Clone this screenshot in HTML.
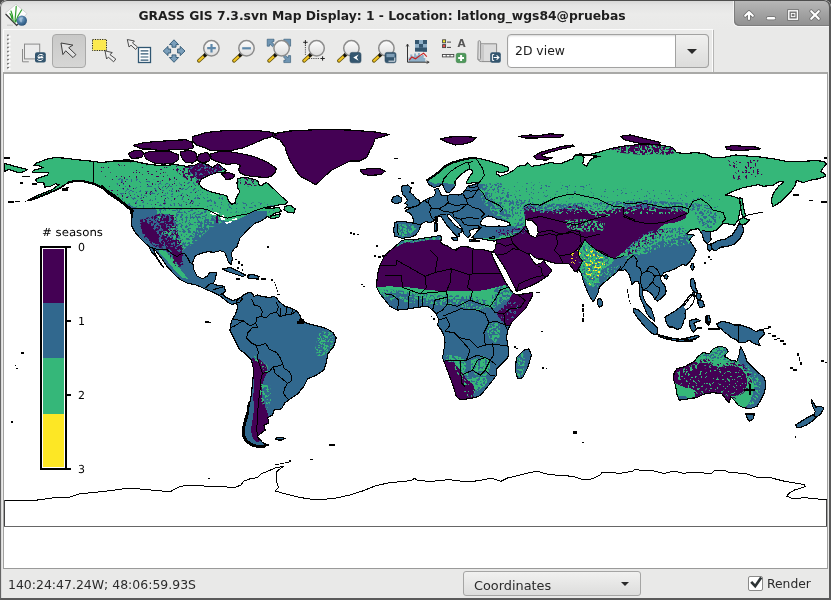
<!DOCTYPE html>
<html lang="en">
<head>
<meta charset="utf-8">
<title>GRASS GIS 7.3.svn Map Display: 1 - Location: latlong_wgs84@pruebas</title>
<style>
html,body{margin:0;padding:0;}
body{width:831px;height:600px;overflow:hidden;background:#4a4a4a;font-family:"DejaVu Sans","Liberation Sans",sans-serif;position:relative;}
#win{position:absolute;left:0;top:0;width:831px;height:600px;box-sizing:border-box;background:#e9e9e8;border-radius:7px 7px 0 0;overflow:hidden;}
#frame{position:absolute;left:0;top:0;width:831px;height:600px;box-sizing:border-box;border-left:1px solid #646464;border-right:2px solid #5a5a5a;border-top:1px solid #4e4e4e;border-bottom:2px solid #5a5a5a;border-radius:7px 7px 0 0;box-shadow:inset 1px 0 0 #dadada;pointer-events:none;}
#titlebar{position:absolute;left:0;top:0;width:831px;height:29px;background:linear-gradient(#d4d4d4 0px,#e4e4e4 5px,#ebebea 14px,#e9e9e8 29px);}
#title{position:absolute;left:0;top:8.5px;width:764px;text-align:center;font-weight:bold;font-size:12.35px;color:#1e1e1e;white-space:nowrap;letter-spacing:0px;}
#ctl{position:absolute;left:734px;top:0;width:97px;height:26px;background:linear-gradient(#b9b9b9,#a6a6a6 45%,#909090);border-bottom-left-radius:5px;box-shadow:-1px 1px 0 #f4f4f4, inset 1px -1px 0 #7d7d7d;}
#toolbar{position:absolute;left:3px;top:29px;width:710px;height:43px;border-top:1px solid #fcfcfc;border-left:1px solid #fcfcfc;border-right:1px solid #fcfcfc;box-sizing:border-box;background:#eaeae9;}
#tbshadow{position:absolute;left:713px;top:30px;width:1px;height:42px;background:#b6b6b5}
#grip{display:none}
#selbtn{position:absolute;left:52px;top:34px;width:34px;height:34px;box-sizing:border-box;border:1px solid #a9a9a8;border-radius:4px;background:linear-gradient(#c9c9c8,#d6d6d5);}
#combo{position:absolute;left:507px;top:34px;width:202px;height:34px;box-sizing:border-box;border:1px solid #a2a2a1;border-radius:4px;background:#fff;box-shadow:inset 0 1px 2px #d8d8d8;}
#combo span{position:absolute;left:7.2px;top:8.3px;font-size:12.4px;color:#1a1a1a;}
#combobtn{position:absolute;left:167px;top:-1px;width:34px;height:34px;box-sizing:border-box;border:1px solid #a2a2a1;border-radius:0 4px 4px 0;background:linear-gradient(#f0f0ef,#dcdcdb);}
#combobtn i{position:absolute;left:11px;top:14px;width:0;height:0;border-left:5px solid transparent;border-right:5px solid transparent;border-top:5px solid #2a2a2a;}
#canvas{position:absolute;left:3px;top:72px;width:825px;height:497px;box-sizing:border-box;border:1px solid #a2a2a1;border-top:2px solid #a9a9a7;border-bottom:1px solid #9a9a99;background:#fff;}
#status{position:absolute;left:8px;top:576.5px;font-size:12.47px;color:#2b2b2b;white-space:nowrap;}
#choice{position:absolute;left:463px;top:571px;width:178px;height:25px;box-sizing:border-box;border:1px solid #a5a5a4;border-radius:3px;background:linear-gradient(#f1f1f0,#dddddc);}
#choice span{position:absolute;left:9.6px;top:6.2px;font-size:12.87px;color:#2b2b2b;}
#choice i{position:absolute;left:157px;top:10px;width:0;height:0;border-left:4px solid transparent;border-right:4px solid transparent;border-top:4px solid #2a2a2a;}
#chk{position:absolute;left:747.5px;top:575.5px;width:15px;height:15px;box-sizing:border-box;border:1px solid #8a8a89;border-radius:2px;background:#fff;}
#render{position:absolute;left:766.5px;top:577.4px;font-size:12.35px;color:#2b2b2b;}
svg{position:absolute;left:0;top:0;}
#title,#status,#render,#combo span,#choice span{will-change:transform;}
</style>
</head>
<body>
<div id="win">
<div style="position:absolute;left:0;top:0;width:831px;height:600px;">
<div id="titlebar"></div>
<div id="title">GRASS GIS 7.3.svn Map Display: 1 - Location: latlong_wgs84@pruebas</div>
<div id="ctl"></div>
<div id="toolbar"></div>
<div id="tbshadow"></div>
<div id="grip"></div>
<div id="selbtn"></div>
<div id="combo"><span>2D view</span><div id="combobtn"><i></i></div></div>
<div id="canvas"></div>
<div id="status">140:24:47.24W; 48:06:59.93S</div>
<div id="choice"><span>Coordinates</span><i></i></div>
<div id="chk"></div>
<div id="render">Render</div>
<svg width="831" height="600" viewBox="0 0 831 600" shape-rendering="crispEdges">
<defs>
<clipPath id="cv"><rect x="4" y="74" width="823" height="494"/></clipPath>
<clipPath id="c_na"><path d="M33.7,165.2 36.2,163.2 42.1,161 48.9,158.5 55.6,157.6 64,158.1 74.1,159.3 84.2,160.5 93.5,161.3 101.1,162.7 107.8,161.8 117.9,160.5 128,160.2 134.8,161.8 115,161.3 127.5,159.5 137.5,162.1 150.1,164.6 162.6,165.6 175.1,164.6 186.4,166.3 195.1,165.1 200.1,162.6 207.6,164.6 212.6,167.6 217.6,163.8 226.2,170.3 223.4,173.1 218.1,172.1 208.9,175.3 201.6,178.8 198.9,183.3 201.6,187.6 208.9,191.1 216.1,193.3 223.4,194.8 226.9,196.1 228.4,200.6 231.2,204.1 234.9,203.6 235.7,199.1 237.7,194.8 239.9,191.8 237.7,187.6 236.9,183.3 237.7,178.8 243.4,177.3 249.2,178.1 255.2,179.6 257.9,181.1 258.7,184.6 261,186.1 263.7,183.8 266.7,182.6 274,189.1 281,196.1 287.5,201.4 286.5,203.9 280.2,204.6 272.7,206.4 265.2,208.9 272.7,208.1 279,207.6 281.5,211.4 275.2,213.1 270.2,216.4 275.2,215.1 280.2,213.9 279,217.1 272.7,218.9 267.2,216.4 265.2,218.1 260.2,221.4 255.2,223.1 251.4,226.4 247.7,229.6 243.9,233.9 240.2,237.6 238.2,242.7 237.2,246.4 233.9,248.9 231.4,252.7 232.2,258.9 231.2,264.7 228.2,261.4 226.4,256.4 224.7,252.2 220.2,250.7 213.9,252.2 207.6,251.7 201.4,253.2 196.4,255.2 195.1,256.3 192.6,262.5 193.9,270.1 197.1,276.3 202.6,278.8 207.1,276.3 209.6,272.6 216.4,272.1 215.6,278.8 213.1,283.8 218.1,285.6 224.4,286.3 225.2,291.3 222.7,294.6 226.4,297.6 232.7,300.6 237.2,299.1 240.2,297.1 242.7,298.8 239.2,302.6 235.2,303.1 232.2,304.6 228.2,302.6 223.9,298.8 219.6,295.6 213.9,292.6 207.6,290.1 201.4,287.1 196.4,285.1 187.6,283.1 180.1,279.6 173.8,273.8 167.1,266.3 161.3,258 156.3,251.3 152.6,248 155.6,255 160.1,262.5 163.8,267.5 161.3,265 156.3,257.5 151.3,251.3 148.8,246.3 141.3,239.5 135,232 133.8,230.1 131.3,225.1 132,217.6 131.3,210.6 125,204.6 115.5,198.1 108,193.1 101.3,185.6 133.1,211.5 128,206.5 121.3,201.4 114.6,195.5 107.8,191.3 101.1,187.1 94.3,184.1 87.6,182.1 80.9,180.7 74.1,181.2 67.4,182.9 64,185.4 57.3,189.6 48.9,193 38.7,197.2 29.5,200.6 27.8,200.3 35.4,196.4 43.8,193 52.2,189.6 59,184.6 55.6,183.7 50.5,186.3 44.6,187.1 43.8,182.9 37.1,182.1 35.4,179.5 38.7,177.9 47.2,175.3 48.9,172.8 40.4,172.8 32,172 33.7,170.3 43,167.7 40.4,166.1Z" clip-rule="evenodd"/></clipPath>
<clipPath id="c_sa"><path d="M236.2,301.1 239.6,298.2 243.8,294.9 248.9,292.3 252.2,293.2 253.9,296.5 257.3,294.9 262.3,296.5 269.1,297.4 274.1,296.5 276.7,298.2 279.2,301.6 284.2,305.8 291,308.3 296.9,310.9 300.2,315.9 301.9,321 307.8,323.5 314.6,325.2 321.3,326.9 328,329.4 333.1,332.8 335.6,337 336.4,337.5 333.9,346.3 327.7,353.8 326.4,362.6 323.9,370.1 316.4,375.1 307.7,378.8 303.9,386.4 297.6,393.9 290.1,398.9 285.1,402.6 281.4,408.9 273.9,410.1 272.6,415.1 267.6,417.6 268.9,422.7 263.9,425.2 265.1,430.2 260.1,433.9 257.6,436.4 262.6,442.7 268.9,445.2 260.1,447.7 251.3,445.2 246.3,442.7 242.6,435.2 242.6,427.7 246.3,417.6 248.8,407.6 251.3,395.1 252.6,382.6 253.8,370.1 251.3,360.1 243.8,352.6 239.6,349.6 236.2,342.9 232.9,336.1 230,331.1 230.3,326 232,320.1 235.4,314.2 237.9,307.5Z" clip-rule="evenodd"/></clipPath>
<clipPath id="c_eurasia"><path d="M394.3,235.9 393.8,229.2 395.1,222.4 400.2,221.1 406.9,222.1 414,223.3 412.8,217.4 410.3,213.2 404.9,211 410.3,208.1 416.2,206.4 419.5,203.6 424.6,200.5 429.1,198 433.9,196.3 435.5,193 434.7,189.6 438.1,188.4 440.3,193 441.4,195.8 447.3,195.5 452.4,194.1 459.1,195.1 462.8,193.5 464.2,191.3 465.9,189.6 466.7,187.1 469.2,185.7 472.6,185 476.8,183.7 479.7,182.3 474.3,182.3 469.2,183.4 466.2,183.7 466.9,181.2 469.2,177 472.6,172.7 471.9,169.9 469.2,169.2 465.5,171.1 461.1,174.4 457.1,178.3 454.9,182 455.4,185.7 452.4,189.1 449.9,192.1 446.5,192.5 444,187.9 442.3,183.7 439.2,186.2 433.9,187.4 428.8,184.5 426.8,180.3 432.2,177 438.9,171.9 445.6,166 452.4,162.6 460.8,160.1 469.2,158.4 476.8,158.1 486.1,160.1 494.5,162.6 502.9,165.2 508.8,167.7 508,171.1 501.2,172.7 496.2,171.6 496.4,173.8 500.1,176.3 507.6,173.8 513.9,170.1 517.6,166.3 525.2,165.1 527.7,162.6 531.4,166.3 540.2,165.1 550.2,162.6 560.2,163.8 566.5,161.3 572.7,158.8 575.2,155 580.2,153.8 584,157.5 582.7,163.8 586.5,166.3 590.2,160.1 594,157.5 600.3,156.3 575,155 580,153.8 587.5,155 597.5,152.5 610.1,148.8 622.6,146.3 635.1,145 647.6,143.8 660.1,145 672.6,147.5 676.4,152.5 685.2,153.8 695.2,152.5 705.2,153.8 712.7,157.5 722.7,157.5 735.2,155 750.2,156.3 755.7,156.3 763.2,157.5 773.2,158.8 785.7,161.3 803.2,161.3 815.7,160.6 823.3,161.3 827,163.8 823.3,167.6 820.7,171.3 824.5,173.8 825.8,176.3 818.2,178.8 810.7,180.1 803.2,182.6 796.2,180.1 795.7,184.6 791.7,190.6 786.7,195.6 780.2,202.1 772.7,206.9 771.2,199.6 773.7,192.6 778.7,186.1 783.7,182.1 779.4,181.3 773.2,185.1 763.2,186.3 758.2,184.6 743.2,187.6 733.1,191.3 725.6,195.1 733.1,196.3 739.4,198.8 741.1,205.1 739.6,212.6 738.1,220.1 734.4,225.1 728.1,223.9 723.1,223.1 716.1,230.1 710.1,232.1 711.1,239.6 707.1,243.7 703.6,240.2 702.6,234.6 698.1,228.6 690.6,230.1 686.1,233.9 694.3,235.1 692.7,236 689.3,240.2 692.7,245.2 696.1,250.3 693.6,256.2 690.2,261.2 686,265.4 682.7,264.3 676,268.3 669.3,271 664,272.6 660.7,277 660,277.9 661.6,281.7 664.7,285.7 666.1,291 664.8,295 660.3,299 657.3,301.1 654.9,299.3 651.7,293.9 647.3,290.7 642.9,289.9 642.5,292.1 642.9,296.1 644.5,300.1 646.5,304.1 649.1,306.5 651.5,309 652.5,313 654,317 654.9,321.5 654.5,321 652,319 649.1,316.5 646.5,313 645.1,309 643.5,305 641.5,301 640,296.1 639.5,292.1 640,288.3 638.7,281.7 634.9,281.7 632,284.3 631.2,281.7 629.3,275 625.6,269.7 620,270.7 622,269.6 618.6,270.5 621.1,266.2 619.4,268.7 616.9,272.1 612.7,275.5 607.6,279.7 602.5,283.9 599.2,287.3 598.3,292.3 595.8,297.4 593.3,301.6 590.8,298.2 588.2,293.2 585.7,287.3 583.2,280.5 581.5,273.8 579,269.6 577.3,272.1 574.8,271.3 572.2,267.9 568.9,263.7 562.1,263.7 553.7,262.9 545.3,260.3 544.3,259.7 543.4,260.5 546,263.9 549.3,267.3 551.9,271 546.8,276.5 539.2,281.6 530.8,285.8 522.4,289.2 516.3,291.4 515.1,287.8 511.9,281.9 508.6,275.2 505.2,268.5 501,261.7 496.6,255.1 495.1,253 492.9,251.3 495.4,248.7 496.3,242.9 497.1,239.5 494.6,241.2 488.7,240.3 480.3,238.6 471.8,237.8 477.7,230.9 481,227.5 476.8,228.3 472.6,229.2 469.2,230.9 470.9,235.1 467.5,237.6 464.2,234.2 462.5,229.2 459.1,224.1 454.1,219.1 449.9,214.9 447,214.4 447.3,216 449.4,218.9 452.4,222.3 454.9,225.3 457.4,227 460.8,229 462.8,231.2 458.8,233.7 459.5,236.3 457.1,236.6 454.9,234.6 451.5,230.4 447.7,226.1 444,221.1 441.4,216.9 438.6,216 433.9,220.8 430.5,222.4 425.4,221.6 421.2,224.1 419.9,227.8 418.2,231.7 415.3,235.1 410.3,237.3 401.8,238.3 397.6,236.8Z M480.3,222.6 482.8,218.4 488.7,215.9 494.6,217.6 497.1,219.3 502.2,220.1 508.9,222.6 510.6,225.2 505.5,226.5 498.8,226 492.1,226.8 485.3,226 481.1,225.2Z M525.9,219.6 532.7,220.9 536.9,225.1 538.2,232.6 535.7,237.6 530.2,235.6 527.7,230.1 525.2,225.1Z M525.8,253 529.1,254.6 532.5,260.5 535.9,264.8 540.9,263.1 543.9,260 542.6,258.9 537.5,258.9 533.3,256.3 530,253Z" clip-rule="evenodd"/></clipPath>
<clipPath id="c_africa"><path d="M397.6,244.3 401,241 406.9,239.3 413.6,240.1 421.2,238.4 428.8,237.6 435.5,236.3 439.8,235.6 441.9,237.6 440.6,241.8 443.1,244.3 448.2,246.4 452.4,249.4 456.6,250.2 459.1,247.7 455,249.6 461.7,246.2 468.5,247.1 475.2,249.6 482.8,249.6 489.5,251.3 492.9,251.3 491.2,253 494.6,260.5 498,267.3 501.3,274 504.7,280.8 508.9,287.5 512.8,292.9 516.5,294.7 522.4,294.1 532.5,292.7 532.8,294.7 530.2,300.1 525.2,308.8 517.7,316.3 511.4,322.6 507.7,330.1 506.4,337.6 507.7,345.1 508.9,351.4 507.7,357.6 501.4,363.9 496.4,368.9 496.4,375.2 492.7,380.2 487.7,386.4 482.7,392.7 479.6,395.6 475.1,397.6 467.6,398.8 460.1,399.6 456.3,396.3 453.8,387.6 450.1,377.6 446.3,367.5 442.6,357.5 443.9,350.1 445.1,342.6 443.9,335.1 441.4,330.1 437.6,325.1 438.8,320.1 436.3,313.8 432.6,310.1 427.6,306.3 418.8,307.1 408.8,308.8 397.5,310.1 390,306.3 385,300.1 380,293.8 376.3,286.3 377.5,275 380,265 385,255Z" clip-rule="evenodd"/></clipPath>
<clipPath id="c_madagascar"><path d="M516.4,357.6 524,350.1 529,348.9 531.5,355.1 527.7,367.6 522.7,377.7 517.7,378.9 515.2,370.2Z" clip-rule="evenodd"/></clipPath>
<clipPath id="c_australia"><path d="M674.3,372.6 676.8,368.8 685.6,366.3 694.3,361.3 698.1,356.3 703.1,352.6 709.4,353.8 713.1,348.8 719.4,346.3 725.6,347.6 728.1,351.3 724.4,356.3 730.6,360.1 736.9,361.3 739.4,353.8 740.6,346.3 744.4,353.8 746.9,361.3 753.2,367.6 759.4,373.8 764.4,377.6 765.7,385.1 764.4,392.6 760.7,400.1 756.9,406.4 749.4,408.9 743.2,407.6 738.1,405.1 734.4,400.1 730.6,396.4 729.4,402.6 725.6,398.9 721.9,393.9 713.1,392.6 704.4,393.9 696.8,397.6 688.1,398.9 679.3,400.1 676.8,393.9 675.6,385.1 673.1,378.8Z" clip-rule="evenodd"/></clipPath>
<clipPath id="c_borneo"><path d="M665,317 670,314 675,311 679,308 683,305 687,299 691,294 695,297 693,303 689,308 686,310 685,313 686,317 684,320 683,324 681,328 677,329.5 673,327 669,327 667,324 665.5,320Z" clip-rule="evenodd"/></clipPath>
<filter id="f31688e_40" x="0" y="0" width="1" height="1" color-interpolation-filters="sRGB"><feTurbulence type="fractalNoise" baseFrequency="0.42" numOctaves="2" seed="11"/><feColorMatrix type="matrix" values="0 0 0 0 0.192 0 0 0 0 0.408 0 0 0 0 0.557 60 0 0 0 -31.50"/></filter>
<filter id="f440154_50" x="0" y="0" width="1" height="1" color-interpolation-filters="sRGB"><feTurbulence type="fractalNoise" baseFrequency="0.42" numOctaves="2" seed="3"/><feColorMatrix type="matrix" values="0 0 0 0 0.267 0 0 0 0 0.004 0 0 0 0 0.329 60 0 0 0 -29.62"/></filter>
<filter id="f35b779_30" x="0" y="0" width="1" height="1" color-interpolation-filters="sRGB"><feTurbulence type="fractalNoise" baseFrequency="0.42" numOctaves="2" seed="23"/><feColorMatrix type="matrix" values="0 0 0 0 0.208 0 0 0 0 0.718 0 0 0 0 0.475 60 0 0 0 -33.46"/></filter>
<filter id="f31688e_30" x="0" y="0" width="1" height="1" color-interpolation-filters="sRGB"><feTurbulence type="fractalNoise" baseFrequency="0.42" numOctaves="2" seed="11"/><feColorMatrix type="matrix" values="0 0 0 0 0.192 0 0 0 0 0.408 0 0 0 0 0.557 60 0 0 0 -33.46"/></filter>
<filter id="f31688e_25" x="0" y="0" width="1" height="1" color-interpolation-filters="sRGB"><feTurbulence type="fractalNoise" baseFrequency="0.42" numOctaves="2" seed="11"/><feColorMatrix type="matrix" values="0 0 0 0 0.192 0 0 0 0 0.408 0 0 0 0 0.557 60 0 0 0 -34.62"/></filter>
<filter id="f440154_35" x="0" y="0" width="1" height="1" color-interpolation-filters="sRGB"><feTurbulence type="fractalNoise" baseFrequency="0.42" numOctaves="2" seed="3"/><feColorMatrix type="matrix" values="0 0 0 0 0.267 0 0 0 0 0.004 0 0 0 0 0.329 60 0 0 0 -32.44"/></filter>
<filter id="f440154_30" x="0" y="0" width="1" height="1" color-interpolation-filters="sRGB"><feTurbulence type="fractalNoise" baseFrequency="0.42" numOctaves="2" seed="3"/><feColorMatrix type="matrix" values="0 0 0 0 0.267 0 0 0 0 0.004 0 0 0 0 0.329 60 0 0 0 -33.46"/></filter>
<filter id="f440154_5" x="0" y="0" width="1" height="1" color-interpolation-filters="sRGB"><feTurbulence type="fractalNoise" baseFrequency="0.42" numOctaves="2" seed="3"/><feColorMatrix type="matrix" values="0 0 0 0 0.267 0 0 0 0 0.004 0 0 0 0 0.329 60 0 0 0 -41.73"/></filter>
<filter id="f31688e_11" x="0" y="0" width="1" height="1" color-interpolation-filters="sRGB"><feTurbulence type="fractalNoise" baseFrequency="0.42" numOctaves="2" seed="11"/><feColorMatrix type="matrix" values="0 0 0 0 0.192 0 0 0 0 0.408 0 0 0 0 0.557 60 0 0 0 -38.67"/></filter>
<filter id="f35b779_40" x="0" y="0" width="1" height="1" color-interpolation-filters="sRGB"><feTurbulence type="fractalNoise" baseFrequency="0.42" numOctaves="2" seed="23"/><feColorMatrix type="matrix" values="0 0 0 0 0.208 0 0 0 0 0.718 0 0 0 0 0.475 60 0 0 0 -31.50"/></filter>
<filter id="f31688e_50" x="0" y="0" width="1" height="1" color-interpolation-filters="sRGB"><feTurbulence type="fractalNoise" baseFrequency="0.42" numOctaves="2" seed="11"/><feColorMatrix type="matrix" values="0 0 0 0 0.192 0 0 0 0 0.408 0 0 0 0 0.557 60 0 0 0 -29.62"/></filter>
<filter id="f35b779_35" x="0" y="0" width="1" height="1" color-interpolation-filters="sRGB"><feTurbulence type="fractalNoise" baseFrequency="0.42" numOctaves="2" seed="23"/><feColorMatrix type="matrix" values="0 0 0 0 0.208 0 0 0 0 0.718 0 0 0 0 0.475 60 0 0 0 -32.44"/></filter>
<filter id="f31688e_14" x="0" y="0" width="1" height="1" color-interpolation-filters="sRGB"><feTurbulence type="fractalNoise" baseFrequency="0.42" numOctaves="2" seed="11"/><feColorMatrix type="matrix" values="0 0 0 0 0.192 0 0 0 0 0.408 0 0 0 0 0.557 60 0 0 0 -37.67"/></filter>
<filter id="f35b779_50" x="0" y="0" width="1" height="1" color-interpolation-filters="sRGB"><feTurbulence type="fractalNoise" baseFrequency="0.42" numOctaves="2" seed="23"/><feColorMatrix type="matrix" values="0 0 0 0 0.208 0 0 0 0 0.718 0 0 0 0 0.475 60 0 0 0 -29.62"/></filter>
<filter id="f35b779_14" x="0" y="0" width="1" height="1" color-interpolation-filters="sRGB"><feTurbulence type="fractalNoise" baseFrequency="0.42" numOctaves="2" seed="23"/><feColorMatrix type="matrix" values="0 0 0 0 0.208 0 0 0 0 0.718 0 0 0 0 0.475 60 0 0 0 -37.67"/></filter>
<filter id="f31688e_28" x="0" y="0" width="1" height="1" color-interpolation-filters="sRGB"><feTurbulence type="fractalNoise" baseFrequency="0.42" numOctaves="2" seed="11"/><feColorMatrix type="matrix" values="0 0 0 0 0.192 0 0 0 0 0.408 0 0 0 0 0.557 60 0 0 0 -33.92"/></filter>
<filter id="f31688e_55" x="0" y="0" width="1" height="1" color-interpolation-filters="sRGB"><feTurbulence type="fractalNoise" baseFrequency="0.42" numOctaves="2" seed="11"/><feColorMatrix type="matrix" values="0 0 0 0 0.192 0 0 0 0 0.408 0 0 0 0 0.557 60 0 0 0 -28.69"/></filter>
<filter id="f35b779_22" x="0" y="0" width="1" height="1" color-interpolation-filters="sRGB"><feTurbulence type="fractalNoise" baseFrequency="0.42" numOctaves="2" seed="23"/><feColorMatrix type="matrix" values="0 0 0 0 0.208 0 0 0 0 0.718 0 0 0 0 0.475 60 0 0 0 -35.31"/></filter>
<filter id="f35b779_45" x="0" y="0" width="1" height="1" color-interpolation-filters="sRGB"><feTurbulence type="fractalNoise" baseFrequency="0.42" numOctaves="2" seed="23"/><feColorMatrix type="matrix" values="0 0 0 0 0.208 0 0 0 0 0.718 0 0 0 0 0.475 60 0 0 0 -30.56"/></filter>
<filter id="f31688e_35" x="0" y="0" width="1" height="1" color-interpolation-filters="sRGB"><feTurbulence type="fractalNoise" baseFrequency="0.42" numOctaves="2" seed="11"/><feColorMatrix type="matrix" values="0 0 0 0 0.192 0 0 0 0 0.408 0 0 0 0 0.557 60 0 0 0 -32.44"/></filter>
<filter id="f440154_25" x="0" y="0" width="1" height="1" color-interpolation-filters="sRGB"><feTurbulence type="fractalNoise" baseFrequency="0.42" numOctaves="2" seed="3"/><feColorMatrix type="matrix" values="0 0 0 0 0.267 0 0 0 0 0.004 0 0 0 0 0.329 60 0 0 0 -34.62"/></filter>
<filter id="ffde725_22" x="0" y="0" width="1" height="1" color-interpolation-filters="sRGB"><feTurbulence type="fractalNoise" baseFrequency="0.42" numOctaves="2" seed="37"/><feColorMatrix type="matrix" values="0 0 0 0 0.992 0 0 0 0 0.906 0 0 0 0 0.145 60 0 0 0 -35.31"/></filter>
<filter id="ffde725_10" x="0" y="0" width="1" height="1" color-interpolation-filters="sRGB"><feTurbulence type="fractalNoise" baseFrequency="0.42" numOctaves="2" seed="37"/><feColorMatrix type="matrix" values="0 0 0 0 0.992 0 0 0 0 0.906 0 0 0 0 0.145 60 0 0 0 -39.00"/></filter>
<filter id="f35b779_20" x="0" y="0" width="1" height="1" color-interpolation-filters="sRGB"><feTurbulence type="fractalNoise" baseFrequency="0.42" numOctaves="2" seed="23"/><feColorMatrix type="matrix" values="0 0 0 0 0.208 0 0 0 0 0.718 0 0 0 0 0.475 60 0 0 0 -35.77"/></filter>
<filter id="f440154_60" x="0" y="0" width="1" height="1" color-interpolation-filters="sRGB"><feTurbulence type="fractalNoise" baseFrequency="0.42" numOctaves="2" seed="3"/><feColorMatrix type="matrix" values="0 0 0 0 0.267 0 0 0 0 0.004 0 0 0 0 0.329 60 0 0 0 -27.75"/></filter>
<filter id="f440154_15" x="0" y="0" width="1" height="1" color-interpolation-filters="sRGB"><feTurbulence type="fractalNoise" baseFrequency="0.42" numOctaves="2" seed="3"/><feColorMatrix type="matrix" values="0 0 0 0 0.267 0 0 0 0 0.004 0 0 0 0 0.329 60 0 0 0 -37.33"/></filter>
<filter id="f31688e_6" x="0" y="0" width="1" height="1" color-interpolation-filters="sRGB"><feTurbulence type="fractalNoise" baseFrequency="0.42" numOctaves="2" seed="11"/><feColorMatrix type="matrix" values="0 0 0 0 0.192 0 0 0 0 0.408 0 0 0 0 0.557 60 0 0 0 -41.18"/></filter>
<filter id="f31688e_45" x="0" y="0" width="1" height="1" color-interpolation-filters="sRGB"><feTurbulence type="fractalNoise" baseFrequency="0.42" numOctaves="2" seed="11"/><feColorMatrix type="matrix" values="0 0 0 0 0.192 0 0 0 0 0.408 0 0 0 0 0.557 60 0 0 0 -30.56"/></filter>
<filter id="f35b779_9" x="0" y="0" width="1" height="1" color-interpolation-filters="sRGB"><feTurbulence type="fractalNoise" baseFrequency="0.42" numOctaves="2" seed="23"/><feColorMatrix type="matrix" values="0 0 0 0 0.208 0 0 0 0 0.718 0 0 0 0 0.475 60 0 0 0 -39.55"/></filter>
<filter id="f35b779_25" x="0" y="0" width="1" height="1" color-interpolation-filters="sRGB"><feTurbulence type="fractalNoise" baseFrequency="0.42" numOctaves="2" seed="23"/><feColorMatrix type="matrix" values="0 0 0 0 0.208 0 0 0 0 0.718 0 0 0 0 0.475 60 0 0 0 -34.62"/></filter>
<clipPath id="k1"><path d="M136.9,209.2 158.8,209.2 161.3,220.3 158.8,228.7 148.7,223.6 140.3,220.3Z"/></clipPath>
<clipPath id="k2"><path d="M138.6,220.3 160.5,213.5 175.6,215.2 177.3,228.7 182.4,245.5 184.1,265.8 175.6,267.4 165.5,248.9 155.4,247.2 143.6,237.1Z"/></clipPath>
<clipPath id="k3"><path d="M189.1,209.2 232.9,209.2 236.3,220.3 222.8,222 209.3,228.7 199.2,238.8 190.8,245.5 187.4,245.5 198.4,226.2Z"/></clipPath>
<clipPath id="k4"><path d="M156.3,209.2 206.8,209.2 211.9,215.2 202.6,220.3 195,232.9 188.3,245.5 179.9,252.3 173.1,250.6 163,235.4 158,218.6Z"/></clipPath>
<clipPath id="k5"><path d="M185.1,165.1 200.1,161.3 231.4,164.6 217.6,171.8 201.4,181.3 192.6,180.1Z"/></clipPath>
<clipPath id="k6"><path d="M175.1,164.6 187.6,166.3 191.4,173.1 196.4,178.1 201.4,181.3 198.9,185.6 187.6,180.1 177.6,172.6Z"/></clipPath>
<clipPath id="k7"><path d="M237.7,178.8 243.4,177.3 255.2,179.6 258.7,184.6 252.7,187.1 243.9,185.6 238.9,183.1Z"/></clipPath>
<clipPath id="k8"><path d="M100,162.6 200.1,162.6 200.1,205.1 125,205.1 100,185.1Z"/></clipPath>
<clipPath id="k9"><path d="M115,177.6 200.1,182.6 240.2,202.6 275.2,202.6 275.2,212.6 125,212.6Z"/></clipPath>
<clipPath id="k10"><path d="M320.2,331.3 332.7,332.5 333.9,345.1 326.4,353.8 317.7,357.6 315.2,347.6 317.7,337.5Z"/></clipPath>
<clipPath id="k11"><path d="M260.1,382.6 270.1,385.1 271.4,400.1 266.4,410.1 261.4,402.6 259.6,392.6Z"/></clipPath>
<clipPath id="k12"><path d="M250.1,353.8 260.1,358.8 267.6,365.6 268.1,372.6 265.1,375.1 262.6,367.6 255.1,361.3Z"/></clipPath>
<clipPath id="k13"><path d="M495.2,287.5 505.2,285 510.2,287.5 512.7,293.8 507.7,300.1 500.2,303.8 492.7,308.8 490.2,300.1Z"/></clipPath>
<clipPath id="k14"><path d="M375.5,290.1 390,289.5 420.1,292.6 442.6,295.6 467.6,295.1 485.2,298.8 492.7,308.8 477.6,301.8 455.1,299.3 430.1,300.6 405.1,294.6 380,293.1Z"/></clipPath>
<clipPath id="k15"><path d="M380,293.1 420.1,297.1 455.1,299.3 485.2,306.8 485.2,312.6 455.1,306.3 420.1,303.8 385,300.1Z"/></clipPath>
<clipPath id="k16"><path d="M500.2,308.8 510.2,298.8 520.2,305.1 515.2,317.6 503.9,325.1 496.4,313.8Z"/></clipPath>
<clipPath id="k17"><path d="M488.9,322.6 496.4,321.3 500.2,327.6 499.7,336.4 495.2,343.1 490.2,340.1 487.2,331.4Z"/></clipPath>
<clipPath id="k18"><path d="M445.1,353.8 492.6,355 491.4,380.1 482.6,393.8 470.1,392.6 460.1,375.1 445.1,367.5Z"/></clipPath>
<clipPath id="k19"><path d="M452.6,362.5 470.1,375.1 480.1,392.6 475.1,397.6 462.6,397.6 457.6,380.1Z"/></clipPath>
<clipPath id="k20"><path d="M453.8,362.5 461.3,371.3 466.3,378.8 472.6,383.8 476.3,395.6 467.6,400.1 462.6,387.6 456.3,375.1Z"/></clipPath>
<clipPath id="k21"><path d="M395.1,239.3 401.8,236.8 410.3,237.6 420.4,236.8 428.8,236.3 440.6,236.3 441.4,239.3 435.5,240.1 428.8,240.1 421.2,241 413.6,242.7 406.9,242.3 401,244.3 396.8,246.9Z"/></clipPath>
<clipPath id="k22"><path d="M516.4,357.6 522.7,352.6 525.2,360.1 522.7,376.4 517.7,378.9 515.2,370.2Z"/></clipPath>
<clipPath id="k23"><path d="M485.1,183.8 488.1,192.6 493.1,200.1 500.6,206.4 506.4,210.6 511.4,216.4 506.4,220.1 495.1,215.1 485.1,205.1 477.6,192.6Z"/></clipPath>
<clipPath id="k24"><path d="M485.1,183.8 500.1,182.6 515.1,195.1 530.2,205.1 525.2,215.1 525.2,230.1 511.4,216.4 500.6,206.4 488.1,192.6Z"/></clipPath>
<clipPath id="k25"><path d="M477.6,226.4 505.1,226.4 525.2,220.1 530.2,230.1 520.2,235.1 500.1,235.6 482.6,233.9Z"/></clipPath>
<clipPath id="k26"><path d="M495.1,230.1 520.2,227.6 525.2,233.9 500.1,236.4Z"/></clipPath>
<clipPath id="k27"><path d="M399.3,224.1 412,225 417,227.5 412,234.2 403.5,236.8 397.6,235.1 396.8,229.2Z"/></clipPath>
<clipPath id="k28"><path d="M500,200 540,204 580,203 620,201 660,201 700,204 700,211 660,209 620,209 580,210 540,213 524,209Z"/></clipPath>
<clipPath id="k29"><path d="M524,207 560,208 620,207 680,209 683,214 640,214 600,214 560,214 530,212Z"/></clipPath>
<clipPath id="k30"><path d="M565,220.1 585,218.9 605.1,222.6 602.6,231.4 582.5,231.4 567.5,228.9Z"/></clipPath>
<clipPath id="k31"><path d="M582.5,202.6 600.1,200.1 612.6,207.6 610.1,216.4 597.5,217.6 585,211.4Z"/></clipPath>
<clipPath id="k32"><path d="M620.3,257 638.8,253.6 652.3,245.2 667.4,240.2 682.6,235.1 692.7,236 693.6,243.5 675.9,246.1 659,247.7 645.5,255.3 628.7,259.5Z"/></clipPath>
<clipPath id="k33"><path d="M622.8,252 633.7,241.8 645.5,232.6 662.4,228.4 682.6,226.7 689.3,233.4 675.9,238.5 659,241.8 645.5,250.3 628.7,255.3Z"/></clipPath>
<clipPath id="k34"><path d="M622.8,252 633.7,241.8 645.5,232.6 662.4,228.4 669.1,231.7 652.3,240.2 638.8,250.3 628.7,255.3Z"/></clipPath>
<clipPath id="k35"><path d="M586.5,248.5 594.1,248.5 607.6,258.6 604.2,268.7 595.8,280.5 594.1,286.4 589.1,283.9 585.7,273.8 584,260.3Z"/></clipPath>
<clipPath id="k36"><path d="M585.7,241 607.6,256.1 614.3,259.5 602.5,269.6 594.1,287.3 584.9,280.5 579.3,269.6 578.1,251.9Z"/></clipPath>
<clipPath id="k37"><path d="M568.9,255.3 579,246.8 584,250.2 579,263.7 570.5,263.7Z"/></clipPath>
<clipPath id="k38"><path d="M594.1,287.3 599.2,275.5 611.8,263.7 621.1,266.2 607.6,279.7 598.3,292.3Z"/></clipPath>
<clipPath id="k39"><path d="M610.1,148.8 622.6,146.3 635.1,145 647.6,143.8 660.1,145 672.6,147.5 676.4,152.5 667.6,155 655.1,153.8 642.6,155 630.1,153.8 617.6,152.5Z"/></clipPath>
<clipPath id="k40"><path d="M728.1,160.1 758.2,160.1 763.2,177.6 733.1,180.1Z"/></clipPath>
<clipPath id="k41"><path d="M510.1,182.6 608,182.6 608,202.6 525.2,203.9Z"/></clipPath>
<clipPath id="k42"><path d="M560,187.6 700.2,190.1 722.7,200.1 710.2,225.1 685.2,202.6 560,202.6Z"/></clipPath>
<clipPath id="k43"><path d="M690.2,202.6 710.2,205.1 720.2,217.6 710.2,230.1 700.2,225.1Z"/></clipPath>
<clipPath id="k44"><path d="M741.6,366.3 746.7,372.6 751.7,378.1 754.2,385.1 753.2,393.1 750.2,400.6 746.2,407.1 753.2,405.1 759.4,395.1 760.7,382.6 755.7,373.8 748.2,365.6Z"/></clipPath>
<clipPath id="k45"><path d="M698.1,356.3 703.1,352.6 709.4,353.8 713.1,348.8 719.4,346.3 725.6,347.6 728.1,351.3 724.4,356.3 730.6,360.1 736.9,361.3 733.1,363.8 718.1,358.8 705.6,358.8Z"/></clipPath>
<clipPath id="k46"><path d="M698.1,363.1 708.1,362.6 718.1,367.6 730.6,365.1 740.6,367.6 746.9,375.1 748.2,385.1 743.2,392.6 735.6,396.4 731.1,396.4 734.4,400.1 740.6,395.1 751.9,387.6 751.9,375.1 743.2,363.8 730.6,361.3 718.1,362.6 708.1,358.8 698.1,360.1Z"/></clipPath>
<clipPath id="k47"><path d="M676.8,372.6 685.6,367.6 698.1,362.6 698.1,368.8 685.6,373.8 678.1,380.1Z"/></clipPath>
<clipPath id="k48"><path d="M676.8,372.6 698.1,362.6 730.6,365.1 746.9,375.1 748.2,385.1 735.6,396.4 710.6,390.1 685.6,387.6 676.8,382.6Z"/></clipPath>
<clipPath id="k49"><path d="M685.6,387.6 710.6,390.1 730.6,393.9 730.6,397.6 721.9,393.9 704.4,394.6 693.1,393.1Z"/></clipPath>
<clipPath id="allland"><path d="M33.7,165.2 36.2,163.2 42.1,161 48.9,158.5 55.6,157.6 64,158.1 74.1,159.3 84.2,160.5 93.5,161.3 101.1,162.7 107.8,161.8 117.9,160.5 128,160.2 134.8,161.8 115,161.3 127.5,159.5 137.5,162.1 150.1,164.6 162.6,165.6 175.1,164.6 186.4,166.3 195.1,165.1 200.1,162.6 207.6,164.6 212.6,167.6 217.6,163.8 226.2,170.3 223.4,173.1 218.1,172.1 208.9,175.3 201.6,178.8 198.9,183.3 201.6,187.6 208.9,191.1 216.1,193.3 223.4,194.8 226.9,196.1 228.4,200.6 231.2,204.1 234.9,203.6 235.7,199.1 237.7,194.8 239.9,191.8 237.7,187.6 236.9,183.3 237.7,178.8 243.4,177.3 249.2,178.1 255.2,179.6 257.9,181.1 258.7,184.6 261,186.1 263.7,183.8 266.7,182.6 274,189.1 281,196.1 287.5,201.4 286.5,203.9 280.2,204.6 272.7,206.4 265.2,208.9 272.7,208.1 279,207.6 281.5,211.4 275.2,213.1 270.2,216.4 275.2,215.1 280.2,213.9 279,217.1 272.7,218.9 267.2,216.4 265.2,218.1 260.2,221.4 255.2,223.1 251.4,226.4 247.7,229.6 243.9,233.9 240.2,237.6 238.2,242.7 237.2,246.4 233.9,248.9 231.4,252.7 232.2,258.9 231.2,264.7 228.2,261.4 226.4,256.4 224.7,252.2 220.2,250.7 213.9,252.2 207.6,251.7 201.4,253.2 196.4,255.2 195.1,256.3 192.6,262.5 193.9,270.1 197.1,276.3 202.6,278.8 207.1,276.3 209.6,272.6 216.4,272.1 215.6,278.8 213.1,283.8 218.1,285.6 224.4,286.3 225.2,291.3 222.7,294.6 226.4,297.6 232.7,300.6 237.2,299.1 240.2,297.1 242.7,298.8 239.2,302.6 235.2,303.1 232.2,304.6 228.2,302.6 223.9,298.8 219.6,295.6 213.9,292.6 207.6,290.1 201.4,287.1 196.4,285.1 187.6,283.1 180.1,279.6 173.8,273.8 167.1,266.3 161.3,258 156.3,251.3 152.6,248 155.6,255 160.1,262.5 163.8,267.5 161.3,265 156.3,257.5 151.3,251.3 148.8,246.3 141.3,239.5 135,232 133.8,230.1 131.3,225.1 132,217.6 131.3,210.6 125,204.6 115.5,198.1 108,193.1 101.3,185.6 133.1,211.5 128,206.5 121.3,201.4 114.6,195.5 107.8,191.3 101.1,187.1 94.3,184.1 87.6,182.1 80.9,180.7 74.1,181.2 67.4,182.9 64,185.4 57.3,189.6 48.9,193 38.7,197.2 29.5,200.6 27.8,200.3 35.4,196.4 43.8,193 52.2,189.6 59,184.6 55.6,183.7 50.5,186.3 44.6,187.1 43.8,182.9 37.1,182.1 35.4,179.5 38.7,177.9 47.2,175.3 48.9,172.8 40.4,172.8 32,172 33.7,170.3 43,167.7 40.4,166.1Z" clip-rule="evenodd"/><path d="M128.2,154.1 131.9,151.2 140.6,150.2 143.8,153.4 141.7,157.7 131.9,158.4Z" clip-rule="evenodd"/><path d="M143.4,154.1 148.2,151.9 160.1,151.2 170.9,151.9 178,154.5 178.9,159.3 173.1,163.2 163.3,164.2 154.7,163.2 146.4,159.3Z" clip-rule="evenodd"/><path d="M133.4,145.4 143.8,142.8 152.5,141.9 163.3,141.1 175.2,140.2 186.1,139.8 192.6,142.6 193.2,148 185,149.7 176.3,149.3 167.6,150.2 159,150.6 150.3,148.9 141.7,148.9Z" clip-rule="evenodd"/><path d="M180.2,151.9 189.3,150.2 195.8,152.3 197.5,159.3 192.6,163.2 185,162.1 181.3,157.1Z" clip-rule="evenodd"/><path d="M192.6,136.7 206.6,132.4 224,130.7 241.3,130.2 258.6,130.7 272.7,132.4 276.4,135.4 264,138.9 255.4,142.8 250,145 242.4,148 232.6,150.2 219.6,151 209.9,150.2 204.5,147.6 196.2,145 192.8,141.1Z" clip-rule="evenodd"/><path d="M209.2,154.5 217.5,151.9 228.3,151.5 241.3,153.6 254.3,156.7 267.7,162.3 276.4,168.4 274.9,172.9 271.6,176.1 267.3,177.4 258.6,177 250,176.1 244.5,175.1 240.2,172.9 238.7,169.6 240.4,165.3 234.8,163.2 228.3,164.5 221.8,163.2 215.3,161 210.5,158.4Z" clip-rule="evenodd"/><path d="M198.4,154.5 206.6,152.3 211,156.7 208.8,161.6 201.2,162.7 197.1,159.9Z" clip-rule="evenodd"/><path d="M221.8,174 228.3,172.2 234.8,175.1 232.6,178.7 226.1,179.4Z" clip-rule="evenodd"/><path d="M272,134 290,131 320,129.5 350,130 375,132 389,134.5 375,139 373,145 370,150 367,157 360,161 350,161 342,165 332,170 325,176 319,182 315.5,184.5 309,181 300,176 295,169 291,162.5 287.5,155 285,147 280,140 273,137Z" clip-rule="evenodd"/><path d="M360,170 367.5,168.8 380,168.8 385,171.3 381,174.5 370,175.5 362.5,173.8Z" clip-rule="evenodd"/><path d="M284.7,206.4 290.2,205.1 295.2,208.9 294,213.1 287.7,212.1 284,209.6Z" clip-rule="evenodd"/><path d="M222.2,269 230.2,267.5 238.2,271.1 245.7,275.1 242.7,276.6 235.2,274.1 227.7,271.6Z" clip-rule="evenodd"/><path d="M247.7,275.1 253.2,274.6 259.2,276.6 258.2,279.1 252.2,278.6 248.2,278.1Z" clip-rule="evenodd"/><path d="M236.2,301.1 239.6,298.2 243.8,294.9 248.9,292.3 252.2,293.2 253.9,296.5 257.3,294.9 262.3,296.5 269.1,297.4 274.1,296.5 276.7,298.2 279.2,301.6 284.2,305.8 291,308.3 296.9,310.9 300.2,315.9 301.9,321 307.8,323.5 314.6,325.2 321.3,326.9 328,329.4 333.1,332.8 335.6,337 336.4,337.5 333.9,346.3 327.7,353.8 326.4,362.6 323.9,370.1 316.4,375.1 307.7,378.8 303.9,386.4 297.6,393.9 290.1,398.9 285.1,402.6 281.4,408.9 273.9,410.1 272.6,415.1 267.6,417.6 268.9,422.7 263.9,425.2 265.1,430.2 260.1,433.9 257.6,436.4 262.6,442.7 268.9,445.2 260.1,447.7 251.3,445.2 246.3,442.7 242.6,435.2 242.6,427.7 246.3,417.6 248.8,407.6 251.3,395.1 252.6,382.6 253.8,370.1 251.3,360.1 243.8,352.6 239.6,349.6 236.2,342.9 232.9,336.1 230,331.1 230.3,326 232,320.1 235.4,314.2 237.9,307.5Z" clip-rule="evenodd"/><path d="M275.1,438.2 280.1,437.2 285.1,438.4 281.4,440.2 276.4,439.7Z" clip-rule="evenodd"/><path d="M394.3,235.9 393.8,229.2 395.1,222.4 400.2,221.1 406.9,222.1 414,223.3 412.8,217.4 410.3,213.2 404.9,211 410.3,208.1 416.2,206.4 419.5,203.6 424.6,200.5 429.1,198 433.9,196.3 435.5,193 434.7,189.6 438.1,188.4 440.3,193 441.4,195.8 447.3,195.5 452.4,194.1 459.1,195.1 462.8,193.5 464.2,191.3 465.9,189.6 466.7,187.1 469.2,185.7 472.6,185 476.8,183.7 479.7,182.3 474.3,182.3 469.2,183.4 466.2,183.7 466.9,181.2 469.2,177 472.6,172.7 471.9,169.9 469.2,169.2 465.5,171.1 461.1,174.4 457.1,178.3 454.9,182 455.4,185.7 452.4,189.1 449.9,192.1 446.5,192.5 444,187.9 442.3,183.7 439.2,186.2 433.9,187.4 428.8,184.5 426.8,180.3 432.2,177 438.9,171.9 445.6,166 452.4,162.6 460.8,160.1 469.2,158.4 476.8,158.1 486.1,160.1 494.5,162.6 502.9,165.2 508.8,167.7 508,171.1 501.2,172.7 496.2,171.6 496.4,173.8 500.1,176.3 507.6,173.8 513.9,170.1 517.6,166.3 525.2,165.1 527.7,162.6 531.4,166.3 540.2,165.1 550.2,162.6 560.2,163.8 566.5,161.3 572.7,158.8 575.2,155 580.2,153.8 584,157.5 582.7,163.8 586.5,166.3 590.2,160.1 594,157.5 600.3,156.3 575,155 580,153.8 587.5,155 597.5,152.5 610.1,148.8 622.6,146.3 635.1,145 647.6,143.8 660.1,145 672.6,147.5 676.4,152.5 685.2,153.8 695.2,152.5 705.2,153.8 712.7,157.5 722.7,157.5 735.2,155 750.2,156.3 755.7,156.3 763.2,157.5 773.2,158.8 785.7,161.3 803.2,161.3 815.7,160.6 823.3,161.3 827,163.8 823.3,167.6 820.7,171.3 824.5,173.8 825.8,176.3 818.2,178.8 810.7,180.1 803.2,182.6 796.2,180.1 795.7,184.6 791.7,190.6 786.7,195.6 780.2,202.1 772.7,206.9 771.2,199.6 773.7,192.6 778.7,186.1 783.7,182.1 779.4,181.3 773.2,185.1 763.2,186.3 758.2,184.6 743.2,187.6 733.1,191.3 725.6,195.1 733.1,196.3 739.4,198.8 741.1,205.1 739.6,212.6 738.1,220.1 734.4,225.1 728.1,223.9 723.1,223.1 716.1,230.1 710.1,232.1 711.1,239.6 707.1,243.7 703.6,240.2 702.6,234.6 698.1,228.6 690.6,230.1 686.1,233.9 694.3,235.1 692.7,236 689.3,240.2 692.7,245.2 696.1,250.3 693.6,256.2 690.2,261.2 686,265.4 682.7,264.3 676,268.3 669.3,271 664,272.6 660.7,277 660,277.9 661.6,281.7 664.7,285.7 666.1,291 664.8,295 660.3,299 657.3,301.1 654.9,299.3 651.7,293.9 647.3,290.7 642.9,289.9 642.5,292.1 642.9,296.1 644.5,300.1 646.5,304.1 649.1,306.5 651.5,309 652.5,313 654,317 654.9,321.5 654.5,321 652,319 649.1,316.5 646.5,313 645.1,309 643.5,305 641.5,301 640,296.1 639.5,292.1 640,288.3 638.7,281.7 634.9,281.7 632,284.3 631.2,281.7 629.3,275 625.6,269.7 620,270.7 622,269.6 618.6,270.5 621.1,266.2 619.4,268.7 616.9,272.1 612.7,275.5 607.6,279.7 602.5,283.9 599.2,287.3 598.3,292.3 595.8,297.4 593.3,301.6 590.8,298.2 588.2,293.2 585.7,287.3 583.2,280.5 581.5,273.8 579,269.6 577.3,272.1 574.8,271.3 572.2,267.9 568.9,263.7 562.1,263.7 553.7,262.9 545.3,260.3 544.3,259.7 543.4,260.5 546,263.9 549.3,267.3 551.9,271 546.8,276.5 539.2,281.6 530.8,285.8 522.4,289.2 516.3,291.4 515.1,287.8 511.9,281.9 508.6,275.2 505.2,268.5 501,261.7 496.6,255.1 495.1,253 492.9,251.3 495.4,248.7 496.3,242.9 497.1,239.5 494.6,241.2 488.7,240.3 480.3,238.6 471.8,237.8 477.7,230.9 481,227.5 476.8,228.3 472.6,229.2 469.2,230.9 470.9,235.1 467.5,237.6 464.2,234.2 462.5,229.2 459.1,224.1 454.1,219.1 449.9,214.9 447,214.4 447.3,216 449.4,218.9 452.4,222.3 454.9,225.3 457.4,227 460.8,229 462.8,231.2 458.8,233.7 459.5,236.3 457.1,236.6 454.9,234.6 451.5,230.4 447.7,226.1 444,221.1 441.4,216.9 438.6,216 433.9,220.8 430.5,222.4 425.4,221.6 421.2,224.1 419.9,227.8 418.2,231.7 415.3,235.1 410.3,237.3 401.8,238.3 397.6,236.8Z M480.3,222.6 482.8,218.4 488.7,215.9 494.6,217.6 497.1,219.3 502.2,220.1 508.9,222.6 510.6,225.2 505.5,226.5 498.8,226 492.1,226.8 485.3,226 481.1,225.2Z M525.9,219.6 532.7,220.9 536.9,225.1 538.2,232.6 535.7,237.6 530.2,235.6 527.7,230.1 525.2,225.1Z M525.8,253 529.1,254.6 532.5,260.5 535.9,264.8 540.9,263.1 543.9,260 542.6,258.9 537.5,258.9 533.3,256.3 530,253Z" clip-rule="evenodd"/><path d="M397.6,244.3 401,241 406.9,239.3 413.6,240.1 421.2,238.4 428.8,237.6 435.5,236.3 439.8,235.6 441.9,237.6 440.6,241.8 443.1,244.3 448.2,246.4 452.4,249.4 456.6,250.2 459.1,247.7 455,249.6 461.7,246.2 468.5,247.1 475.2,249.6 482.8,249.6 489.5,251.3 492.9,251.3 491.2,253 494.6,260.5 498,267.3 501.3,274 504.7,280.8 508.9,287.5 512.8,292.9 516.5,294.7 522.4,294.1 532.5,292.7 532.8,294.7 530.2,300.1 525.2,308.8 517.7,316.3 511.4,322.6 507.7,330.1 506.4,337.6 507.7,345.1 508.9,351.4 507.7,357.6 501.4,363.9 496.4,368.9 496.4,375.2 492.7,380.2 487.7,386.4 482.7,392.7 479.6,395.6 475.1,397.6 467.6,398.8 460.1,399.6 456.3,396.3 453.8,387.6 450.1,377.6 446.3,367.5 442.6,357.5 443.9,350.1 445.1,342.6 443.9,335.1 441.4,330.1 437.6,325.1 438.8,320.1 436.3,313.8 432.6,310.1 427.6,306.3 418.8,307.1 408.8,308.8 397.5,310.1 390,306.3 385,300.1 380,293.8 376.3,286.3 377.5,275 380,265 385,255Z" clip-rule="evenodd"/><path d="M516.4,357.6 524,350.1 529,348.9 531.5,355.1 527.7,367.6 522.7,377.7 517.7,378.9 515.2,370.2Z" clip-rule="evenodd"/><path d="M674.3,372.6 676.8,368.8 685.6,366.3 694.3,361.3 698.1,356.3 703.1,352.6 709.4,353.8 713.1,348.8 719.4,346.3 725.6,347.6 728.1,351.3 724.4,356.3 730.6,360.1 736.9,361.3 739.4,353.8 740.6,346.3 744.4,353.8 746.9,361.3 753.2,367.6 759.4,373.8 764.4,377.6 765.7,385.1 764.4,392.6 760.7,400.1 756.9,406.4 749.4,408.9 743.2,407.6 738.1,405.1 734.4,400.1 730.6,396.4 729.4,402.6 725.6,398.9 721.9,393.9 713.1,392.6 704.4,393.9 696.8,397.6 688.1,398.9 679.3,400.1 676.8,393.9 675.6,385.1 673.1,378.8Z" clip-rule="evenodd"/><path d="M745.7,413.9 754.4,413.9 753.2,418.9 749.4,421.4 746.9,417.6Z" clip-rule="evenodd"/><path d="M811.2,399.6 813.7,403.1 815.7,407.1 820.7,406.4 824,408.1 821.2,413.1 817,417.1 813.7,415.6 815.2,411.4 813.2,407.6 812,403.9Z" clip-rule="evenodd"/><path d="M813.2,414.6 816.2,417.6 812,421.4 807,424.7 801.2,427.2 797,427.7 795.7,424.7 801.2,421.4 807,417.6Z" clip-rule="evenodd"/><path d="M716.9,323.8 721.9,321.3 728.1,322.5 734.4,325 740.6,325 748.2,327.5 755.7,331.3 763.2,330 764.4,333.8 760.7,337.5 758.2,341.3 760.2,345.6 753.2,343.1 749.4,340.1 745.7,342.1 739.4,342.6 735.6,339.5 731.9,338 728.1,334.5 724.4,332.5 721.1,328.8 717.6,326.3Z" clip-rule="evenodd"/><path d="M633.5,308.5 638,309.5 642,313 646,317 650,321 654,324.5 657,327 657.5,330 657,334.5 653,334 649,331 645,327 641,322 637,317 634,312.5Z" clip-rule="evenodd"/><path d="M657.5,334.5 665,336.5 673,338.5 681,339.5 689,340 688,341.8 677,341 667,339.3 659,336.3Z" clip-rule="evenodd"/><path d="M665,317 670,314 675,311 679,308 683,305 687,299 691,294 695,297 693,303 689,308 686,310 685,313 686,317 684,320 683,324 681,328 677,329.5 673,327 669,327 667,324 665.5,320Z" clip-rule="evenodd"/><path d="M689.4,320.6 696.4,318.9 700.2,320.6 693.9,323.1 696.4,328.9 693.2,332.1 690.2,327.6Z" clip-rule="evenodd"/><path d="M690.4,279.3 693.3,278.3 694.9,282.3 696,288.3 698,293 694.7,292.3 692,289 690.3,284.3Z" clip-rule="evenodd"/><path d="M697.7,300.6 702.7,300.1 704.5,306.3 700.2,307.6 698.2,304.6Z" clip-rule="evenodd"/><path d="M597.2,299.9 600,298.2 602.5,301.6 602.2,305.8 599.2,307.2 597.5,304.1Z" clip-rule="evenodd"/><path d="M691.3,264.1 693.6,263.3 694.1,267 692.7,270.3 690.7,267.7Z" clip-rule="evenodd"/><path d="M664,275.7 666.7,274.7 668.3,276.6 666.7,279.3 664.3,278.3Z" clip-rule="evenodd"/><path d="M401.8,186.2 407.7,185 411.1,187.9 409.9,192.1 413.3,195.1 416.2,198.5 419.5,200.5 420,204.2 416.2,206.4 410.3,207.3 404.9,208.1 407.7,205.3 404.9,203.1 407.7,200.5 405.6,197.2 402.7,194.6 401.8,190.4Z" clip-rule="evenodd"/><path d="M392.6,197.2 397.6,195.5 401.8,198 401,202.2 395.1,203.9 391.7,201.4Z" clip-rule="evenodd"/><path d="M710.6,244.7 717.6,240.7 725.1,239.1 732.1,235.1 736.1,229.1 738.6,224.1 742.6,225.1 743.7,231.4 740.6,237.6 734.6,244.2 726.6,246.7 720.1,247.2 716.1,250.7 712.1,249.7Z" clip-rule="evenodd"/><path d="M738.6,220.1 743.2,217.6 749.4,220.1 745.7,223.9 740.6,224.6Z" clip-rule="evenodd"/><path d="M739.4,197.6 742.6,198.8 743.2,206.4 745.7,216.4 742.6,217.1 740.6,207.6Z" clip-rule="evenodd"/><path d="M440.1,138.8 450.1,137 462.6,136.3 476.3,137.5 472.6,141.3 465.1,143.8 455.1,145 447.6,142.5Z" clip-rule="evenodd"/><path d="M572.7,145 562.7,146.3 550.2,149.5 540.2,152.5 533.9,156.3 536.4,159.5 546.4,160.1 552.7,157.5 543.9,157 541.4,155 550.2,152 562.7,148.8 574,146.3Z" clip-rule="evenodd"/><path d="M518.9,136.3 530.2,135 540.2,135.5 550.2,133.8 564,135 560.2,137.5 547.7,137.5 535.2,138 525.2,138Z" clip-rule="evenodd"/><path d="M620.1,136.3 630.1,135 640.1,137.5 650.1,140 660.1,142.5 658.9,145 647.6,144.5 635.1,142.5 625.1,140Z" clip-rule="evenodd"/><path d="M725.6,147 733.1,145.5 743.2,146.3 755.7,147 760.7,148.8 748.2,150 735.6,150.5 726.9,149.5Z" clip-rule="evenodd"/><path d="M4,163.5 9,164.5 15,166.5 23,168.5 27.5,169.5 25,171 20,173 15,171.5 9,169.5 4,171.5Z" clip-rule="evenodd"/><path d="M707.6,244.7 711.1,243.7 712.1,249.2 709.1,251.2 707.1,247.7Z" clip-rule="evenodd"/><path d="M696.3,293.9 700,293.4 701.6,296.3 700,299.7 697.3,299 695.7,296.3Z" clip-rule="evenodd"/><path d="M682.7,304.6 689.3,296.6 690.7,295.3 691.5,296.1 684.3,305.4Z" clip-rule="evenodd"/><path d="M692.7,293 694.7,292.6 694.9,295 693.1,295.3Z" clip-rule="evenodd"/><path d="M705.6,316.3 709.4,315.5 710.6,321.3 708.6,325.5 706.1,322.5Z" clip-rule="evenodd"/><path d="M686.8,338 698.1,335 699.1,337 688.6,340.6Z" clip-rule="evenodd"/><path d="M451.5,237.6 457.8,236.9 457.1,240.6 453.2,240Z" clip-rule="evenodd"/><path d="M434.2,223.1 436.9,222.8 437.1,230.9 434.7,231.2Z" clip-rule="evenodd"/><path d="M435.2,217.7 436.9,217.7 436.9,221.8 435.4,221.9Z" clip-rule="evenodd"/><path d="M469.2,239.8 479.3,240.3 479,241.5 469.6,241.1Z" clip-rule="evenodd"/><path d="M489.4,237.6 494.5,236.3 494.2,238.3 490.3,238.9Z" clip-rule="evenodd"/></clipPath>
</defs>
<g clip-path="url(#cv)">
<g stroke="#000" stroke-width="1.2" stroke-linejoin="round" fill-rule="evenodd">
<path d="M33.7,165.2 36.2,163.2 42.1,161 48.9,158.5 55.6,157.6 64,158.1 74.1,159.3 84.2,160.5 93.5,161.3 101.1,162.7 107.8,161.8 117.9,160.5 128,160.2 134.8,161.8 115,161.3 127.5,159.5 137.5,162.1 150.1,164.6 162.6,165.6 175.1,164.6 186.4,166.3 195.1,165.1 200.1,162.6 207.6,164.6 212.6,167.6 217.6,163.8 226.2,170.3 223.4,173.1 218.1,172.1 208.9,175.3 201.6,178.8 198.9,183.3 201.6,187.6 208.9,191.1 216.1,193.3 223.4,194.8 226.9,196.1 228.4,200.6 231.2,204.1 234.9,203.6 235.7,199.1 237.7,194.8 239.9,191.8 237.7,187.6 236.9,183.3 237.7,178.8 243.4,177.3 249.2,178.1 255.2,179.6 257.9,181.1 258.7,184.6 261,186.1 263.7,183.8 266.7,182.6 274,189.1 281,196.1 287.5,201.4 286.5,203.9 280.2,204.6 272.7,206.4 265.2,208.9 272.7,208.1 279,207.6 281.5,211.4 275.2,213.1 270.2,216.4 275.2,215.1 280.2,213.9 279,217.1 272.7,218.9 267.2,216.4 265.2,218.1 260.2,221.4 255.2,223.1 251.4,226.4 247.7,229.6 243.9,233.9 240.2,237.6 238.2,242.7 237.2,246.4 233.9,248.9 231.4,252.7 232.2,258.9 231.2,264.7 228.2,261.4 226.4,256.4 224.7,252.2 220.2,250.7 213.9,252.2 207.6,251.7 201.4,253.2 196.4,255.2 195.1,256.3 192.6,262.5 193.9,270.1 197.1,276.3 202.6,278.8 207.1,276.3 209.6,272.6 216.4,272.1 215.6,278.8 213.1,283.8 218.1,285.6 224.4,286.3 225.2,291.3 222.7,294.6 226.4,297.6 232.7,300.6 237.2,299.1 240.2,297.1 242.7,298.8 239.2,302.6 235.2,303.1 232.2,304.6 228.2,302.6 223.9,298.8 219.6,295.6 213.9,292.6 207.6,290.1 201.4,287.1 196.4,285.1 187.6,283.1 180.1,279.6 173.8,273.8 167.1,266.3 161.3,258 156.3,251.3 152.6,248 155.6,255 160.1,262.5 163.8,267.5 161.3,265 156.3,257.5 151.3,251.3 148.8,246.3 141.3,239.5 135,232 133.8,230.1 131.3,225.1 132,217.6 131.3,210.6 125,204.6 115.5,198.1 108,193.1 101.3,185.6 133.1,211.5 128,206.5 121.3,201.4 114.6,195.5 107.8,191.3 101.1,187.1 94.3,184.1 87.6,182.1 80.9,180.7 74.1,181.2 67.4,182.9 64,185.4 57.3,189.6 48.9,193 38.7,197.2 29.5,200.6 27.8,200.3 35.4,196.4 43.8,193 52.2,189.6 59,184.6 55.6,183.7 50.5,186.3 44.6,187.1 43.8,182.9 37.1,182.1 35.4,179.5 38.7,177.9 47.2,175.3 48.9,172.8 40.4,172.8 32,172 33.7,170.3 43,167.7 40.4,166.1Z" fill="#35b779"/>
<path d="M128.2,154.1 131.9,151.2 140.6,150.2 143.8,153.4 141.7,157.7 131.9,158.4Z" fill="#440154"/>
<path d="M143.4,154.1 148.2,151.9 160.1,151.2 170.9,151.9 178,154.5 178.9,159.3 173.1,163.2 163.3,164.2 154.7,163.2 146.4,159.3Z" fill="#440154"/>
<path d="M133.4,145.4 143.8,142.8 152.5,141.9 163.3,141.1 175.2,140.2 186.1,139.8 192.6,142.6 193.2,148 185,149.7 176.3,149.3 167.6,150.2 159,150.6 150.3,148.9 141.7,148.9Z" fill="#440154"/>
<path d="M180.2,151.9 189.3,150.2 195.8,152.3 197.5,159.3 192.6,163.2 185,162.1 181.3,157.1Z" fill="#440154"/>
<path d="M192.6,136.7 206.6,132.4 224,130.7 241.3,130.2 258.6,130.7 272.7,132.4 276.4,135.4 264,138.9 255.4,142.8 250,145 242.4,148 232.6,150.2 219.6,151 209.9,150.2 204.5,147.6 196.2,145 192.8,141.1Z" fill="#440154"/>
<path d="M209.2,154.5 217.5,151.9 228.3,151.5 241.3,153.6 254.3,156.7 267.7,162.3 276.4,168.4 274.9,172.9 271.6,176.1 267.3,177.4 258.6,177 250,176.1 244.5,175.1 240.2,172.9 238.7,169.6 240.4,165.3 234.8,163.2 228.3,164.5 221.8,163.2 215.3,161 210.5,158.4Z" fill="#440154"/>
<path d="M198.4,154.5 206.6,152.3 211,156.7 208.8,161.6 201.2,162.7 197.1,159.9Z" fill="#440154"/>
<path d="M221.8,174 228.3,172.2 234.8,175.1 232.6,178.7 226.1,179.4Z" fill="#440154"/>
<path d="M272,134 290,131 320,129.5 350,130 375,132 389,134.5 375,139 373,145 370,150 367,157 360,161 350,161 342,165 332,170 325,176 319,182 315.5,184.5 309,181 300,176 295,169 291,162.5 287.5,155 285,147 280,140 273,137Z" fill="#440154"/>
<path d="M360,170 367.5,168.8 380,168.8 385,171.3 381,174.5 370,175.5 362.5,173.8Z" fill="#440154"/>
<path d="M284.7,206.4 290.2,205.1 295.2,208.9 294,213.1 287.7,212.1 284,209.6Z" fill="#35b779"/>
<path d="M222.2,269 230.2,267.5 238.2,271.1 245.7,275.1 242.7,276.6 235.2,274.1 227.7,271.6Z" fill="#31688e"/>
<path d="M247.7,275.1 253.2,274.6 259.2,276.6 258.2,279.1 252.2,278.6 248.2,278.1Z" fill="#31688e"/>
<path d="M236.2,301.1 239.6,298.2 243.8,294.9 248.9,292.3 252.2,293.2 253.9,296.5 257.3,294.9 262.3,296.5 269.1,297.4 274.1,296.5 276.7,298.2 279.2,301.6 284.2,305.8 291,308.3 296.9,310.9 300.2,315.9 301.9,321 307.8,323.5 314.6,325.2 321.3,326.9 328,329.4 333.1,332.8 335.6,337 336.4,337.5 333.9,346.3 327.7,353.8 326.4,362.6 323.9,370.1 316.4,375.1 307.7,378.8 303.9,386.4 297.6,393.9 290.1,398.9 285.1,402.6 281.4,408.9 273.9,410.1 272.6,415.1 267.6,417.6 268.9,422.7 263.9,425.2 265.1,430.2 260.1,433.9 257.6,436.4 262.6,442.7 268.9,445.2 260.1,447.7 251.3,445.2 246.3,442.7 242.6,435.2 242.6,427.7 246.3,417.6 248.8,407.6 251.3,395.1 252.6,382.6 253.8,370.1 251.3,360.1 243.8,352.6 239.6,349.6 236.2,342.9 232.9,336.1 230,331.1 230.3,326 232,320.1 235.4,314.2 237.9,307.5Z" fill="#31688e"/>
<path d="M275.1,438.2 280.1,437.2 285.1,438.4 281.4,440.2 276.4,439.7Z" fill="#31688e"/>
<path d="M394.3,235.9 393.8,229.2 395.1,222.4 400.2,221.1 406.9,222.1 414,223.3 412.8,217.4 410.3,213.2 404.9,211 410.3,208.1 416.2,206.4 419.5,203.6 424.6,200.5 429.1,198 433.9,196.3 435.5,193 434.7,189.6 438.1,188.4 440.3,193 441.4,195.8 447.3,195.5 452.4,194.1 459.1,195.1 462.8,193.5 464.2,191.3 465.9,189.6 466.7,187.1 469.2,185.7 472.6,185 476.8,183.7 479.7,182.3 474.3,182.3 469.2,183.4 466.2,183.7 466.9,181.2 469.2,177 472.6,172.7 471.9,169.9 469.2,169.2 465.5,171.1 461.1,174.4 457.1,178.3 454.9,182 455.4,185.7 452.4,189.1 449.9,192.1 446.5,192.5 444,187.9 442.3,183.7 439.2,186.2 433.9,187.4 428.8,184.5 426.8,180.3 432.2,177 438.9,171.9 445.6,166 452.4,162.6 460.8,160.1 469.2,158.4 476.8,158.1 486.1,160.1 494.5,162.6 502.9,165.2 508.8,167.7 508,171.1 501.2,172.7 496.2,171.6 496.4,173.8 500.1,176.3 507.6,173.8 513.9,170.1 517.6,166.3 525.2,165.1 527.7,162.6 531.4,166.3 540.2,165.1 550.2,162.6 560.2,163.8 566.5,161.3 572.7,158.8 575.2,155 580.2,153.8 584,157.5 582.7,163.8 586.5,166.3 590.2,160.1 594,157.5 600.3,156.3 575,155 580,153.8 587.5,155 597.5,152.5 610.1,148.8 622.6,146.3 635.1,145 647.6,143.8 660.1,145 672.6,147.5 676.4,152.5 685.2,153.8 695.2,152.5 705.2,153.8 712.7,157.5 722.7,157.5 735.2,155 750.2,156.3 755.7,156.3 763.2,157.5 773.2,158.8 785.7,161.3 803.2,161.3 815.7,160.6 823.3,161.3 827,163.8 823.3,167.6 820.7,171.3 824.5,173.8 825.8,176.3 818.2,178.8 810.7,180.1 803.2,182.6 796.2,180.1 795.7,184.6 791.7,190.6 786.7,195.6 780.2,202.1 772.7,206.9 771.2,199.6 773.7,192.6 778.7,186.1 783.7,182.1 779.4,181.3 773.2,185.1 763.2,186.3 758.2,184.6 743.2,187.6 733.1,191.3 725.6,195.1 733.1,196.3 739.4,198.8 741.1,205.1 739.6,212.6 738.1,220.1 734.4,225.1 728.1,223.9 723.1,223.1 716.1,230.1 710.1,232.1 711.1,239.6 707.1,243.7 703.6,240.2 702.6,234.6 698.1,228.6 690.6,230.1 686.1,233.9 694.3,235.1 692.7,236 689.3,240.2 692.7,245.2 696.1,250.3 693.6,256.2 690.2,261.2 686,265.4 682.7,264.3 676,268.3 669.3,271 664,272.6 660.7,277 660,277.9 661.6,281.7 664.7,285.7 666.1,291 664.8,295 660.3,299 657.3,301.1 654.9,299.3 651.7,293.9 647.3,290.7 642.9,289.9 642.5,292.1 642.9,296.1 644.5,300.1 646.5,304.1 649.1,306.5 651.5,309 652.5,313 654,317 654.9,321.5 654.5,321 652,319 649.1,316.5 646.5,313 645.1,309 643.5,305 641.5,301 640,296.1 639.5,292.1 640,288.3 638.7,281.7 634.9,281.7 632,284.3 631.2,281.7 629.3,275 625.6,269.7 620,270.7 622,269.6 618.6,270.5 621.1,266.2 619.4,268.7 616.9,272.1 612.7,275.5 607.6,279.7 602.5,283.9 599.2,287.3 598.3,292.3 595.8,297.4 593.3,301.6 590.8,298.2 588.2,293.2 585.7,287.3 583.2,280.5 581.5,273.8 579,269.6 577.3,272.1 574.8,271.3 572.2,267.9 568.9,263.7 562.1,263.7 553.7,262.9 545.3,260.3 544.3,259.7 543.4,260.5 546,263.9 549.3,267.3 551.9,271 546.8,276.5 539.2,281.6 530.8,285.8 522.4,289.2 516.3,291.4 515.1,287.8 511.9,281.9 508.6,275.2 505.2,268.5 501,261.7 496.6,255.1 495.1,253 492.9,251.3 495.4,248.7 496.3,242.9 497.1,239.5 494.6,241.2 488.7,240.3 480.3,238.6 471.8,237.8 477.7,230.9 481,227.5 476.8,228.3 472.6,229.2 469.2,230.9 470.9,235.1 467.5,237.6 464.2,234.2 462.5,229.2 459.1,224.1 454.1,219.1 449.9,214.9 447,214.4 447.3,216 449.4,218.9 452.4,222.3 454.9,225.3 457.4,227 460.8,229 462.8,231.2 458.8,233.7 459.5,236.3 457.1,236.6 454.9,234.6 451.5,230.4 447.7,226.1 444,221.1 441.4,216.9 438.6,216 433.9,220.8 430.5,222.4 425.4,221.6 421.2,224.1 419.9,227.8 418.2,231.7 415.3,235.1 410.3,237.3 401.8,238.3 397.6,236.8Z M480.3,222.6 482.8,218.4 488.7,215.9 494.6,217.6 497.1,219.3 502.2,220.1 508.9,222.6 510.6,225.2 505.5,226.5 498.8,226 492.1,226.8 485.3,226 481.1,225.2Z M525.9,219.6 532.7,220.9 536.9,225.1 538.2,232.6 535.7,237.6 530.2,235.6 527.7,230.1 525.2,225.1Z M525.8,253 529.1,254.6 532.5,260.5 535.9,264.8 540.9,263.1 543.9,260 542.6,258.9 537.5,258.9 533.3,256.3 530,253Z" fill="#35b779"/>
<path d="M397.6,244.3 401,241 406.9,239.3 413.6,240.1 421.2,238.4 428.8,237.6 435.5,236.3 439.8,235.6 441.9,237.6 440.6,241.8 443.1,244.3 448.2,246.4 452.4,249.4 456.6,250.2 459.1,247.7 455,249.6 461.7,246.2 468.5,247.1 475.2,249.6 482.8,249.6 489.5,251.3 492.9,251.3 491.2,253 494.6,260.5 498,267.3 501.3,274 504.7,280.8 508.9,287.5 512.8,292.9 516.5,294.7 522.4,294.1 532.5,292.7 532.8,294.7 530.2,300.1 525.2,308.8 517.7,316.3 511.4,322.6 507.7,330.1 506.4,337.6 507.7,345.1 508.9,351.4 507.7,357.6 501.4,363.9 496.4,368.9 496.4,375.2 492.7,380.2 487.7,386.4 482.7,392.7 479.6,395.6 475.1,397.6 467.6,398.8 460.1,399.6 456.3,396.3 453.8,387.6 450.1,377.6 446.3,367.5 442.6,357.5 443.9,350.1 445.1,342.6 443.9,335.1 441.4,330.1 437.6,325.1 438.8,320.1 436.3,313.8 432.6,310.1 427.6,306.3 418.8,307.1 408.8,308.8 397.5,310.1 390,306.3 385,300.1 380,293.8 376.3,286.3 377.5,275 380,265 385,255Z" fill="#440154"/>
<path d="M516.4,357.6 524,350.1 529,348.9 531.5,355.1 527.7,367.6 522.7,377.7 517.7,378.9 515.2,370.2Z" fill="#31688e"/>
<path d="M674.3,372.6 676.8,368.8 685.6,366.3 694.3,361.3 698.1,356.3 703.1,352.6 709.4,353.8 713.1,348.8 719.4,346.3 725.6,347.6 728.1,351.3 724.4,356.3 730.6,360.1 736.9,361.3 739.4,353.8 740.6,346.3 744.4,353.8 746.9,361.3 753.2,367.6 759.4,373.8 764.4,377.6 765.7,385.1 764.4,392.6 760.7,400.1 756.9,406.4 749.4,408.9 743.2,407.6 738.1,405.1 734.4,400.1 730.6,396.4 729.4,402.6 725.6,398.9 721.9,393.9 713.1,392.6 704.4,393.9 696.8,397.6 688.1,398.9 679.3,400.1 676.8,393.9 675.6,385.1 673.1,378.8Z" fill="#440154"/>
<path d="M745.7,413.9 754.4,413.9 753.2,418.9 749.4,421.4 746.9,417.6Z" fill="#31688e"/>
<path d="M811.2,399.6 813.7,403.1 815.7,407.1 820.7,406.4 824,408.1 821.2,413.1 817,417.1 813.7,415.6 815.2,411.4 813.2,407.6 812,403.9Z" fill="#31688e"/>
<path d="M813.2,414.6 816.2,417.6 812,421.4 807,424.7 801.2,427.2 797,427.7 795.7,424.7 801.2,421.4 807,417.6Z" fill="#31688e"/>
<path d="M716.9,323.8 721.9,321.3 728.1,322.5 734.4,325 740.6,325 748.2,327.5 755.7,331.3 763.2,330 764.4,333.8 760.7,337.5 758.2,341.3 760.2,345.6 753.2,343.1 749.4,340.1 745.7,342.1 739.4,342.6 735.6,339.5 731.9,338 728.1,334.5 724.4,332.5 721.1,328.8 717.6,326.3Z" fill="#31688e"/>
<path d="M633.5,308.5 638,309.5 642,313 646,317 650,321 654,324.5 657,327 657.5,330 657,334.5 653,334 649,331 645,327 641,322 637,317 634,312.5Z" fill="#31688e"/>
<path d="M657.5,334.5 665,336.5 673,338.5 681,339.5 689,340 688,341.8 677,341 667,339.3 659,336.3Z" fill="#31688e"/>
<path d="M665,317 670,314 675,311 679,308 683,305 687,299 691,294 695,297 693,303 689,308 686,310 685,313 686,317 684,320 683,324 681,328 677,329.5 673,327 669,327 667,324 665.5,320Z" fill="#31688e"/>
<path d="M689.4,320.6 696.4,318.9 700.2,320.6 693.9,323.1 696.4,328.9 693.2,332.1 690.2,327.6Z" fill="#31688e"/>
<path d="M690.4,279.3 693.3,278.3 694.9,282.3 696,288.3 698,293 694.7,292.3 692,289 690.3,284.3Z" fill="#31688e"/>
<path d="M697.7,300.6 702.7,300.1 704.5,306.3 700.2,307.6 698.2,304.6Z" fill="#31688e"/>
<path d="M597.2,299.9 600,298.2 602.5,301.6 602.2,305.8 599.2,307.2 597.5,304.1Z" fill="#31688e"/>
<path d="M691.3,264.1 693.6,263.3 694.1,267 692.7,270.3 690.7,267.7Z" fill="#31688e"/>
<path d="M664,275.7 666.7,274.7 668.3,276.6 666.7,279.3 664.3,278.3Z" fill="#31688e"/>
<path d="M401.8,186.2 407.7,185 411.1,187.9 409.9,192.1 413.3,195.1 416.2,198.5 419.5,200.5 420,204.2 416.2,206.4 410.3,207.3 404.9,208.1 407.7,205.3 404.9,203.1 407.7,200.5 405.6,197.2 402.7,194.6 401.8,190.4Z" fill="#31688e"/>
<path d="M392.6,197.2 397.6,195.5 401.8,198 401,202.2 395.1,203.9 391.7,201.4Z" fill="#31688e"/>
<path d="M710.6,244.7 717.6,240.7 725.1,239.1 732.1,235.1 736.1,229.1 738.6,224.1 742.6,225.1 743.7,231.4 740.6,237.6 734.6,244.2 726.6,246.7 720.1,247.2 716.1,250.7 712.1,249.7Z" fill="#31688e"/>
<path d="M738.6,220.1 743.2,217.6 749.4,220.1 745.7,223.9 740.6,224.6Z" fill="#35b779"/>
<path d="M739.4,197.6 742.6,198.8 743.2,206.4 745.7,216.4 742.6,217.1 740.6,207.6Z" fill="#35b779"/>
<path d="M440.1,138.8 450.1,137 462.6,136.3 476.3,137.5 472.6,141.3 465.1,143.8 455.1,145 447.6,142.5Z" fill="#440154"/>
<path d="M572.7,145 562.7,146.3 550.2,149.5 540.2,152.5 533.9,156.3 536.4,159.5 546.4,160.1 552.7,157.5 543.9,157 541.4,155 550.2,152 562.7,148.8 574,146.3Z" fill="#440154"/>
<path d="M518.9,136.3 530.2,135 540.2,135.5 550.2,133.8 564,135 560.2,137.5 547.7,137.5 535.2,138 525.2,138Z" fill="#440154"/>
<path d="M620.1,136.3 630.1,135 640.1,137.5 650.1,140 660.1,142.5 658.9,145 647.6,144.5 635.1,142.5 625.1,140Z" fill="#440154"/>
<path d="M725.6,147 733.1,145.5 743.2,146.3 755.7,147 760.7,148.8 748.2,150 735.6,150.5 726.9,149.5Z" fill="#440154"/>
<path d="M4,163.5 9,164.5 15,166.5 23,168.5 27.5,169.5 25,171 20,173 15,171.5 9,169.5 4,171.5Z" fill="#35b779"/>
<path d="M707.6,244.7 711.1,243.7 712.1,249.2 709.1,251.2 707.1,247.7Z" fill="#31688e"/>
<path d="M696.3,293.9 700,293.4 701.6,296.3 700,299.7 697.3,299 695.7,296.3Z" fill="#31688e"/>
<path d="M682.7,304.6 689.3,296.6 690.7,295.3 691.5,296.1 684.3,305.4Z" fill="#31688e"/>
<path d="M692.7,293 694.7,292.6 694.9,295 693.1,295.3Z" fill="#31688e"/>
<path d="M705.6,316.3 709.4,315.5 710.6,321.3 708.6,325.5 706.1,322.5Z" fill="#31688e"/>
<path d="M686.8,338 698.1,335 699.1,337 688.6,340.6Z" fill="#31688e"/>
<path d="M451.5,237.6 457.8,236.9 457.1,240.6 453.2,240Z" fill="#31688e"/>
<path d="M434.2,223.1 436.9,222.8 437.1,230.9 434.7,231.2Z" fill="#31688e"/>
<path d="M435.2,217.7 436.9,217.7 436.9,221.8 435.4,221.9Z" fill="#31688e"/>
<path d="M469.2,239.8 479.3,240.3 479,241.5 469.6,241.1Z" fill="#31688e"/>
<path d="M489.4,237.6 494.5,236.3 494.2,238.3 490.3,238.9Z" fill="#35b779"/>
</g>
<g clip-path="url(#c_africa)">
<path d="M360,287.5 375.5,288 380,291.1 390,291.1 405.1,292.6 420.1,295.1 430.1,298.1 442.6,298.1 455.1,297.1 467.6,297.1 477.6,299.6 485.2,304.6 492.7,307.1 496.4,290.1 505.2,286.3 511.4,290.1 510.2,298.8 506.4,303.8 500.2,308.8 496.4,313.8 500.2,318.8 503.9,325.1 510.2,326.3 560.3,326.3 560.3,450.3 360,450.3Z" fill="#31688e"/>
<path d="M375,287 390,286.3 410.1,287.5 425.1,289.5 442.6,291.3 460.1,291.3 472.6,291.3 485.2,290.1 495.2,287.5 505.2,285 510.2,287.5 512.7,293.8 507.7,300.1 500.2,303.8 492.7,308.8 485.2,306.3 477.6,301.3 467.6,298.8 455.1,298.8 442.6,300.1 430.1,300.1 420.1,296.3 405.1,293.8 390,292.6 380,292.6 375.5,290.1Z" fill="#35b779"/>
<g clip-path="url(#k13)"><rect x="489" y="284" width="25" height="26" filter="url(#f31688e_50)"/></g>
<g clip-path="url(#k14)"><rect x="374" y="288" width="120" height="22" filter="url(#f31688e_40)"/></g>
<g clip-path="url(#k15)"><rect x="379" y="292" width="108" height="22" filter="url(#f35b779_35)"/></g>
<path d="M500.2,308.8 506.4,303.8 510.2,298.8 512.7,293.8 520.2,295.1 535.2,292.6 532.7,302.6 525.2,311.3 517.7,318.8 510.2,325.1 503.9,325.1 500.2,318.8 496.4,313.8Z" fill="#440154"/>
<g clip-path="url(#k16)"><rect x="495" y="297" width="27" height="30" filter="url(#f31688e_14)"/></g>
<g clip-path="url(#k17)"><rect x="486" y="320" width="16" height="25" filter="url(#f35b779_50)"/></g>
<path d="M446.3,355 457.6,355.5 466.3,361.3 465.1,372.6 458.8,375.1 450.1,371.3 445.1,362.5Z" fill="#35b779"/>
<path d="M471.3,360 483.9,356.3 491.4,361.3 490.1,370.1 485.1,376.3 475.1,375.1 470.1,367.5Z" fill="#35b779"/>
<path d="M466.3,380.1 475.1,376.3 486.4,377.6 488.1,386.3 482.6,392.6 475.1,396.3 471.3,390.1Z" fill="#35b779"/>
<g clip-path="url(#k18)"><rect x="444" y="352" width="50" height="43" filter="url(#f31688e_40)"/></g>
<g clip-path="url(#k19)"><rect x="451" y="361" width="31" height="38" filter="url(#f35b779_30)"/></g>
<path d="M441.3,360.5 453.8,362.5 461.3,371.3 466.3,378.8 472.6,383.8 475.1,390.1 476.3,395.6 467.6,400.1 460.1,401.3 455.1,397.6 448.8,380.1 441.3,365Z" fill="#440154"/>
<g clip-path="url(#k20)"><rect x="452" y="361" width="26" height="41" filter="url(#f35b779_14)"/></g>
<path d="M474.1,398.8 482.6,394.6 488.9,388.1 493.6,380.6 497.1,374.6 493.6,373.1 488.9,380.1 483.9,386.3 478.1,390.8 473.1,394.1Z" fill="#31688e"/>
<path d="M395.1,239.3 401.8,236.8 410.3,237.6 420.4,236.8 428.8,236.3 440.6,236.3 441.4,239.3 435.5,240.1 428.8,240.1 421.2,241 413.6,242.7 406.9,242.3 401,244.3 396.8,246.9Z" fill="#31688e"/>
<g clip-path="url(#k21)"><rect x="394" y="235" width="49" height="13" filter="url(#f35b779_40)"/></g>
</g>
<g clip-path="url(#c_australia)">
<path d="M694.3,361.3 698.1,356.3 703.1,352.6 709.4,353.8 713.1,348.8 719.4,346.3 725.6,347.6 728.1,351.3 724.4,356.3 730.6,360.1 736.9,361.3 738.6,353.8 740.6,360.1 744.4,366.3 749.4,372.6 755.7,377.6 758.2,385.1 756.9,392.6 753.2,400.1 748.2,405.1 743.2,408.1 738.1,405.6 734.4,400.1 731.1,396.4 735.6,396.4 742.6,392.1 747.2,385.1 746.2,375.1 740.6,368.1 730.6,365.1 718.1,367.6 708.1,362.6 698.1,363.1Z" fill="#35b779"/>
<path d="M739.4,345.1 743.2,345.1 748.2,361.3 754.4,367.6 766.9,377.6 766.9,386.4 765.7,393.9 761.9,401.4 758.2,407.6 749.4,410.1 746.2,407.1 750.2,400.6 753.2,393.1 754.2,385.1 751.7,378.1 746.7,372.6 741.6,366.3 738.1,360.1 737.1,353.8Z" fill="#31688e"/>
<g clip-path="url(#k44)"><rect x="740" y="364" width="22" height="45" filter="url(#f35b779_30)"/></g>
<path d="M674.3,382.6 679.3,385.1 685.6,387.6 693.1,388.9 695.6,396.4 688.1,398.9 679.3,400.1 676.8,393.9 675.6,386.4Z" fill="#35b779"/>
<path d="M678.1,396.4 685.6,396.4 688.6,398.9 679.3,400.6Z" fill="#31688e"/>
<g clip-path="url(#k45)"><rect x="697" y="345" width="41" height="20" filter="url(#f31688e_45)"/></g>
<g clip-path="url(#k46)"><rect x="697" y="357" width="56" height="45" filter="url(#f440154_35)"/></g>
<g clip-path="url(#k47)"><rect x="675" y="361" width="25" height="21" filter="url(#f35b779_30)"/></g>
<g clip-path="url(#k48)"><rect x="675" y="361" width="75" height="37" filter="url(#f35b779_9)"/></g>
<g clip-path="url(#k49)"><rect x="684" y="386" width="48" height="13" filter="url(#f35b779_25)"/></g>
</g>
<g clip-path="url(#c_borneo)">
<path d="M683,305 687,299 691,294 695,297 693,303 689,308 686,310Z" fill="#fff"/>
</g>
<g clip-path="url(#c_eurasia)">
<path d="M495,240 503,238.5 511,237 516,233 521,229 527,224 524,214 524,208 530,205 540,210 550,211 560,208 575,205 585,208 597.5,211 610,210 620,207.6 632.6,206.4 642.6,203.9 655,207.6 667.6,207.6 680,208.9 687.7,212.6 685,218.9 675,222.6 665,223.9 660,227.6 655,232.6 645,233.9 640,240 632.6,242.6 627.6,247.7 622.6,252.7 617.6,256.4 614.3,258.3 607.6,256.1 602.5,253.6 596.7,250.2 592.4,246.8 587.4,242.6 584.9,239.3 582.7,243.5 580.3,247.7 578.1,251.9 579.3,257 582.7,261.2 579.8,266.2 576.4,271.3 570,300 480,310 480,250Z" fill="#440154"/>
<path d="M387.5,170.1 425,178.8 435,183.8 442.6,182.6 450.1,183.8 460.1,185.6 472.6,183.8 485.1,183.8 488.1,192.6 493.1,200.1 500.6,206.4 506.4,210.6 511.4,216.4 506.4,220.1 510.1,225.1 517.6,227.6 520.2,231.4 505.1,233.9 497.6,238.1 482.6,238.1 475.1,237.6 462.6,240.2 437.5,245.2 387.5,245.2Z" fill="#31688e"/>
<g clip-path="url(#k23)"><rect x="476" y="182" width="37" height="40" filter="url(#f35b779_40)"/></g>
<g clip-path="url(#k24)"><rect x="484" y="181" width="48" height="51" filter="url(#f31688e_28)"/></g>
<g clip-path="url(#k25)"><rect x="476" y="219" width="56" height="18" filter="url(#f31688e_50)"/></g>
<g clip-path="url(#k26)"><rect x="494" y="226" width="33" height="12" filter="url(#f440154_30)"/></g>
<g clip-path="url(#k27)"><rect x="395" y="223" width="24" height="15" filter="url(#f35b779_50)"/></g>
<g clip-path="url(#k28)"><rect x="499" y="199" width="203" height="16" filter="url(#f31688e_55)"/></g>
<g clip-path="url(#k29)"><rect x="523" y="206" width="162" height="10" filter="url(#f35b779_22)"/></g>
<g clip-path="url(#k30)"><rect x="564" y="217" width="43" height="16" filter="url(#f35b779_45)"/></g>
<g clip-path="url(#k31)"><rect x="581" y="199" width="33" height="20" filter="url(#f35b779_40)"/></g>
<path d="M576.4,271.8 582.7,273 584.9,280.5 589.1,285.6 594.1,287.3 596.7,282.2 599.2,275.5 602.5,269.6 607.6,266.2 611.8,263.7 614.3,259.5 621.1,257 626.1,253.6 620.3,257 628.7,255.3 638.8,253.6 645.5,250.3 652.3,245.2 659,241.8 667.4,240.2 675.9,238.5 682.6,235.1 689.3,233.4 696.1,235.1 720,240 720,345 570,345 570,275Z" fill="#31688e"/>
<g clip-path="url(#k32)"><rect x="619" y="234" width="76" height="27" filter="url(#f35b779_30)"/></g>
<g clip-path="url(#k33)"><rect x="621" y="225" width="70" height="32" filter="url(#f31688e_35)"/></g>
<g clip-path="url(#k34)"><rect x="621" y="227" width="50" height="30" filter="url(#f440154_25)"/></g>
<path d="M701.1,230.6 711.9,230.6 713.1,245.2 701.1,245.2Z" fill="#31688e"/>
<g clip-path="url(#k35)"><rect x="583" y="247" width="26" height="41" filter="url(#ffde725_22)"/></g>
<g clip-path="url(#k36)"><rect x="577" y="240" width="39" height="49" filter="url(#f31688e_25)"/></g>
<g clip-path="url(#k37)"><rect x="567" y="245" width="19" height="20" filter="url(#ffde725_10)"/></g>
<g clip-path="url(#k38)"><rect x="593" y="262" width="30" height="32" filter="url(#f35b779_20)"/></g>
<g clip-path="url(#k39)"><rect x="609" y="142" width="69" height="15" filter="url(#f440154_60)"/></g>
<g clip-path="url(#k40)"><rect x="727" y="159" width="38" height="23" filter="url(#f440154_15)"/></g>
<g clip-path="url(#k41)"><rect x="509" y="181" width="101" height="24" filter="url(#f31688e_6)"/></g>
<g clip-path="url(#k42)"><rect x="559" y="186" width="165" height="41" filter="url(#f31688e_6)"/></g>
<g clip-path="url(#k43)"><rect x="689" y="201" width="33" height="31" filter="url(#f31688e_40)"/></g>
</g>
<g clip-path="url(#c_madagascar)">
<g clip-path="url(#k22)"><rect x="514" y="351" width="13" height="29" filter="url(#f35b779_40)"/></g>
</g>
<g clip-path="url(#c_na)">
<path d="M129.3,204.3 137.7,209.2 206.8,209.2 211.9,215.2 216.1,217.7 222.8,220.3 229.6,222 236.3,220.3 243,216.9 249.8,213.5 255,211 266.6,211 266.6,312.9 115,312.9 115,204.3Z" fill="#31688e"/>
<path d="M156.3,209.2 206.8,209.2 211.9,215.2 208.5,218.6 202.6,220.3 198.4,226.2 195,232.9 191.7,239.6 188.3,245.5 184.1,249.8 179.9,252.3 173.1,250.6 167.2,243.9 163,235.4 160.5,227 158,218.6Z" fill="#35b779"/>
<g clip-path="url(#k1)"><rect x="135" y="208" width="28" height="22" filter="url(#f31688e_40)"/></g>
<path d="M140.3,222.8 146.2,222 151.2,225.3 154.6,231.2 158,237.1 159.6,243.9 155.4,243.9 149.5,240.5 144.5,233.7 141.1,227.9Z" fill="#440154"/>
<path d="M161.3,216.1 168.9,213.5 174,216.9 174.8,222.8 170.6,227.9 165.5,231.2 161.3,228.7 159.6,222.8Z" fill="#440154"/>
<path d="M161.3,234.6 168.9,236.3 175.6,241.3 180.7,247.2 182.4,254 181.5,262.4 178.2,265.8 174.8,259 172.3,252.3 167.2,245.5 163,240.5Z" fill="#440154"/>
<path d="M158,248.9 165.5,251.4 172.3,257.3 179,267.4 185.8,275.9 189.1,279.2 182.4,277.5 174,269.1 165.5,259 159.6,253.1Z" fill="#35b779"/>
<g clip-path="url(#k2)"><rect x="137" y="212" width="49" height="57" filter="url(#f440154_50)"/></g>
<g clip-path="url(#k3)"><rect x="186" y="208" width="52" height="39" filter="url(#f35b779_30)"/></g>
<g clip-path="url(#k4)"><rect x="155" y="208" width="58" height="46" filter="url(#f31688e_30)"/></g>
<path d="M187.6,166.3 195.1,164.6 200.1,162.1 207.6,164.1 212.6,167.1 217.6,163.3 225.2,162.1 231.4,165.1 225.2,169.3 217.6,171.8 207.6,176.1 201.4,180.1 196.4,178.1 191.4,173.1Z" fill="#440154"/>
<g clip-path="url(#k5)"><rect x="184" y="160" width="49" height="23" filter="url(#f31688e_25)"/></g>
<g clip-path="url(#k6)"><rect x="174" y="163" width="29" height="24" filter="url(#f440154_35)"/></g>
<g clip-path="url(#k7)"><rect x="236" y="176" width="24" height="13" filter="url(#f440154_30)"/></g>
<g clip-path="url(#k8)"><rect x="99" y="161" width="103" height="46" filter="url(#f440154_5)"/></g>
<g clip-path="url(#k9)"><rect x="114" y="176" width="163" height="38" filter="url(#f31688e_11)"/></g>
<path d="M209.4,213.1 213.9,211.6 219.6,213.1 217.6,215.6 212.6,215.1Z" fill="#fff"/>
<path d="M215.6,216.1 217.6,216.1 218.1,222.6 216.1,222.6Z" fill="#440154"/>
<path d="M219.6,216.1 224.2,215.1 225.2,219.6 221.7,220.1Z" fill="#fff"/>
<path d="M225.2,222.6 231.4,220.6 232.2,222.1 226.4,224.1Z" fill="#fff"/>
<path d="M232.2,219.1 237.2,218.1 237.2,219.6 232.7,220.6Z" fill="#fff"/>
</g>
<g clip-path="url(#c_sa)">
<path d="M252.1,358.1 260.6,359.6 266.9,366.3 266.9,373.1 264.4,378.1 261.9,386.4 260.6,395.1 257.1,400.1 254.1,393.1 253.6,380.6 254.1,370.6Z" fill="#440154"/>
<path d="M254.6,380 262.8,380 262.3,388.7 262.3,397.3 264.6,404.5 267.2,411.8 268.9,416.8 268,423.3 266,429.1 264.3,434.2 260.8,439.2 257.9,442.7 253.9,439.9 251.7,434.9 251,429.1 252.1,421.9 253.4,414.7 253.9,406 253.2,397.3 253.9,388.7Z" fill="#440154"/>
<g clip-path="url(#k10)"><rect x="314" y="330" width="21" height="29" filter="url(#f35b779_40)"/></g>
<g clip-path="url(#k11)"><rect x="258" y="381" width="15" height="31" filter="url(#f35b779_30)"/></g>
<g clip-path="url(#k12)"><rect x="249" y="352" width="21" height="25" filter="url(#f35b779_30)"/></g>
</g>
<g fill="none" stroke="#000" stroke-width="1" stroke-linejoin="round" clip-path="url(#allland)">
<path d="M131.3,208.1 150.1,208.1 175.1,208.1 198.9,208.1 207.6,209.6 213.9,213.1 220.2,216.4 227.7,218.1 233.9,216.4 240.2,215.1 247.7,213.9 255.2,210.6 262.7,208.1 270.2,206.4 275.2,208.1 M93.5,161.3 93.5,185 97,188 103,192 110,199 116,204 M147.9,246.4 155.4,248.9 163.9,249.8 167.2,249.8 172.3,254 177.3,256.5 180.7,254 184.1,253.1 187.4,257.3 190,262.4 192.8,264.1 M205.1,288.1 210.1,283.8 213.1,283.6 M213.1,290.1 217.6,288.1 222.7,287.6 M219.6,295.6 223.2,292.6 225.2,291.6 M251.7,299.2 254.2,305 260,306.7 262.5,311.7 260.8,316.7 M260.8,316.7 266.7,317.5 270.8,313.3 276.7,312.5 280,316.7 285.8,315 291.7,314.2 296.7,310.8 M276.7,312.5 278.3,306.7 275.8,301.7 M280,316.7 280.8,308.3 M285.8,315 286.7,307.5 M291.7,314.2 292.5,308.3 M260.8,316.7 256.7,317.5 255.8,323.3 257.5,327.5 252.5,327.5 247.5,333.3 246.7,338.3 251.7,343.3 255.8,345 258.3,345.8 265.8,343.3 269.2,349.2 276.7,352.5 280,357.5 282.5,363.3 284.2,368.3 289.2,371.7 291.7,376.7 291.7,380.8 287.5,383.3 285,387.5 283.3,393.3 287,398.3 290.8,401.3 M230.8,327.5 235,325.8 240,322.5 243.3,320.8 237.5,320 232.5,319.2 M243.3,320.8 250,325.8 255.8,323.3 M255.8,345 258.3,351.7 257.5,358.3 259.2,363.3 260.8,368.3 262.5,373.3 269.2,371.7 273.3,366.7 280,365.8 282.5,363.3 M273.3,366.7 275,373.3 281.7,378.3 287.5,383.3 M262.5,373.3 260.8,380 260,390 258.3,403.3 257.5,416.7 256.7,430 258.3,440 M523.9,206.4 530.2,203.9 540.2,205.1 550.2,200.1 555.2,197.6 565.2,195.1 575.2,193.8 585.2,196.3 597.7,198.8 608,203.9 M623,202.6 630.5,203.9 639.3,202.6 653,205.1 664.3,207.6 680.6,206.4 688.6,208.9 693.1,201.4 700.6,198.8 708.1,203.9 713.1,210.1 723.1,212.6 725.6,218.9 721.9,222.6 M608.1,203.9 613.8,206.4 623.1,207.1 M623,216.4 635.5,221.4 648,223.9 663.1,222.6 676.8,217.6 688.6,212.6 688.6,208.9 M623.1,207.1 623.8,215.1 635.1,220.1 M584.9,239.3 582.7,243.5 580.3,247.7 578.1,251.9 579.3,257 582.7,261.2 579.8,266.2 576.4,271.3 M584.9,239.3 587.4,242.6 592.4,246.8 596.7,250.2 602.5,253.6 607.6,256.1 614.3,258.3 619.4,257.8 624.4,255.3 M596.7,250.2 602.5,251.9 607.6,254.9 M620,270.7 624,265.7 627.3,260.3 630.7,257.7 633.3,255 M633.3,255 637.3,260.3 636,265.7 640,268.3 642,273.7 640,279 641.3,285.7 642.9,289.9 M642,273.7 646.7,271 651.3,272.3 654.7,276.3 652.7,281.7 655.3,285.7 660,288.3 658.7,293.7 654.9,299.3 M646.7,271 648.7,267 653.3,266.3 657.3,269.7 660.7,277 M654.7,276.3 658.7,275 662.7,279 664.7,285.7 M642.9,289.9 647.3,287.7 652.7,281.7 M702.6,230.1 706.9,231.9 710.6,231.1 M510.6,237 515.6,235.3 520.7,231.9 523.2,228.5 M497.1,239.5 503.9,238.6 510.6,237 513.1,243.7 519,249.6 525.8,253 M496.3,242.9 500.5,243.7 505.5,246.2 513.1,243.7 M523.2,228.5 527.4,231.9 532.5,237 542.6,235.3 549.3,233.6 556.1,235.3 M556.1,235.3 557.8,243.7 554.4,250.4 559.4,255.5 562.8,263.1 M556.1,235.3 564.5,233.6 572.9,230.2 579.7,231.9 M559.4,255.5 569.6,254.6 576.3,250.4 581.3,243.7 579.7,231.9 M495.4,255.5 505.5,253.8 513.1,248.7 519,249.6 M516.3,291.4 519,284.1 525.8,280.8 534.2,277.4 542.6,275.7 546.8,276.5 M542.6,275.7 540.9,267.3 537.5,265.6 M525.9,219.6 540.2,216.4 555.2,220.1 575.2,225.1 590.2,220.1 608,215.1 M538.2,232.6 550.2,230.1 560.2,233.9 572.7,232.6 585.2,237.6 600.3,233.9 M397.6,224.1 397.1,229.2 398.5,235.1 M414,223.3 417.9,224.1 421.2,224.1 M424.6,200.5 428.8,203.9 431.3,207.3 429.6,212.3 431.3,216.5 433.9,220.8 M429.1,198 428.8,203.9 M447.3,195.5 448.2,202.2 444.8,205.6 438.9,209 431.3,208.1 M462.5,193 465.9,198.9 467.5,203.9 455.8,205.6 448.2,203.1 M442.3,183.7 444,178.6 449.9,171.9 457.4,166.8 465.9,162.6 472.6,161.8 M470.1,169.9 469.2,165.2 467.5,161.8 M479.7,182 484.4,175.3 482.7,168.5 479.3,163.5 476.8,159.3 M476.8,182.9 478.5,188.7 483.6,193.8 486.1,198.9 492.8,202.2 499.6,205.6 502.9,209 499.6,212.3 M467.5,203.9 472.6,207.3 479.3,209 484.4,214 481,217.4 M433.9,217.4 440.6,214.9 446.5,214 M438.9,209 444,211.5 452.4,212.3 459.1,210.6 467.5,203.9 M452.4,212.3 454.1,217.4 460.8,219.1 469.2,217.4 479.3,219.1 M460.8,219.1 464.2,224.1 469.2,225.8 476.8,225 481,227.5 M465.9,198.9 472.6,197.2 478.5,188.7 M466.7,186.2 472.6,187.9 477.7,186.2 M464.2,189.6 470.9,191.3 478.5,189.6 M396.3,260 425.1,276.3 435.1,272.5 451.4,268.8 470.1,275 M380,265 396.3,265 396.3,260 M385,275 401.3,275 402.6,287.5 M472.6,250 472.6,273.8 500.2,273.8 M470.1,275 472.6,273.8 M470.1,275 467.6,287.5 472.6,291.3 470.1,300.1 M425.1,276.3 426.3,287.5 420.1,293.8 M451.4,268.8 450.1,282.5 446.4,291.3 447.6,297.6 M435.1,272.5 437.6,257.5 430.1,250 M402.6,287.5 410.1,290.1 420.1,293.8 430.1,292.6 446.4,291.3 M397.5,310.1 398.8,300.1 392.5,295.1 385,293.8 M408.8,308.8 408.8,297.6 410.1,290.1 M418.8,307.1 418.1,296.3 M422.6,306.6 422.1,296.3 M432.6,310.1 435.1,300.1 445.1,297.6 447.6,297.6 M436.3,313.8 442.6,310.1 447.6,303.8 447.6,297.6 M447.6,303.8 457.6,306.3 470.1,300.1 480.2,303.8 490.2,306.3 495.2,312.6 M442.6,316.3 455.1,311.3 460.1,308.8 477.6,310.1 485.2,313.8 488.9,322.6 483.9,332.6 485.2,345.1 477.6,347.6 470.1,340.1 458.9,337.6 453.9,332.6 445.1,331.4 M438.8,320.1 446.4,317.6 450.1,325.1 445.1,331.4 M458.9,337.6 470.1,350.1 466.4,360.1 445.1,360.1 M495.2,312.6 503.9,313.8 510.2,308.8 520.2,307.6 525.2,300.1 516.4,293.8 M490.2,306.3 496.4,297.6 500.2,290.1 507.7,287.5 M503.9,313.8 505.2,325.1 510.2,325.1 M488.9,322.6 496.4,321.3 505.2,325.1 M505.2,325.1 507.7,330.1 M485.2,345.1 492.7,343.9 500.2,345.1 507.7,345.1 M492.7,343.9 493.9,355.1 490.2,360.1 496.4,365.1 M466.4,360.1 477.6,355.1 485.2,357.6 490.2,360.1 M460.1,360.1 461.4,382.7 465.1,386.4 M461.4,375.2 472.6,370.2 480.2,375.2 485.2,370.2 490.2,375.2 495.2,375.2 M472.6,370.2 477.6,360.1 485.2,357.6 M485.2,370.2 490.2,360.1 M738.1,326 738.1,340.6"/>
</g>
<g fill="none" stroke="#000" stroke-width="1" stroke-linejoin="round">
<path d="M743,216.5 748,215 753,214 758,213 763,212.3"/>
<path d="M247.8,412.5 245.5,420.4 243.5,427.7 243.3,434.9 246.2,440.6 251.3,444.7 258.5,446.7 266.2,445.8" stroke-width="3"/>
<path d="M248.8,401.7 247.8,412.5" stroke-width="2"/>
<path d="M132,217.6 131.3,210.6 125,204.6 115.5,198.1 108,193.1 101.3,185.6" stroke-width="2.2"/>
<path d="M133.1,211.5 128,206.5 121.3,201.4 114.6,195.5 107.8,191.3 101.1,187.1 94.3,184.1 87.6,182.1 80.9,180.7 74.1,181.2 67.4,182.9" stroke-width="2.2"/>
<path d="M64,185.4 57.3,189.6 48.9,193 38.7,197.2 29.5,200.6" stroke-width="1.8"/>
<path d="M426.8,180.3 432.2,177 438.9,171.9 445.6,166 452.4,162.6 460.8,160.1 469.2,158.4 476.8,158.1" stroke-width="2.2"/>
<path d="M33.7,165.2 36.2,163.2 42.1,161 48.9,158.5 55.6,157.6 64,158.1 74.1,159.3 84.2,160.5 93.5,161.3 101.1,162.7 107.8,161.8 117.9,160.5 128,160.2 134.8,161.8 115,161.3 127.5,159.5 137.5,162.1 150.1,164.6 162.6,165.6 175.1,164.6 186.4,166.3 195.1,165.1 200.1,162.6 207.6,164.6 212.6,167.6 217.6,163.8 226.2,170.3 223.4,173.1 218.1,172.1 208.9,175.3 201.6,178.8 198.9,183.3 201.6,187.6 208.9,191.1 216.1,193.3 223.4,194.8 226.9,196.1 228.4,200.6 231.2,204.1 234.9,203.6 235.7,199.1 237.7,194.8 239.9,191.8 237.7,187.6 236.9,183.3 237.7,178.8 243.4,177.3 249.2,178.1 255.2,179.6 257.9,181.1 258.7,184.6 261,186.1 263.7,183.8 266.7,182.6 274,189.1 281,196.1 287.5,201.4 286.5,203.9 280.2,204.6 272.7,206.4 265.2,208.9 272.7,208.1 279,207.6 281.5,211.4 275.2,213.1 270.2,216.4 275.2,215.1 280.2,213.9 279,217.1 272.7,218.9 267.2,216.4 265.2,218.1 260.2,221.4 255.2,223.1 251.4,226.4 247.7,229.6 243.9,233.9 240.2,237.6 238.2,242.7 237.2,246.4 233.9,248.9 231.4,252.7 232.2,258.9 231.2,264.7 228.2,261.4 226.4,256.4 224.7,252.2 220.2,250.7 213.9,252.2 207.6,251.7 201.4,253.2 196.4,255.2 195.1,256.3 192.6,262.5 193.9,270.1 197.1,276.3 202.6,278.8 207.1,276.3 209.6,272.6 216.4,272.1 215.6,278.8 213.1,283.8 218.1,285.6 224.4,286.3 225.2,291.3 222.7,294.6 226.4,297.6 232.7,300.6 237.2,299.1 240.2,297.1 242.7,298.8 239.2,302.6 235.2,303.1 232.2,304.6 228.2,302.6 223.9,298.8 219.6,295.6 213.9,292.6 207.6,290.1 201.4,287.1 196.4,285.1 187.6,283.1 180.1,279.6 173.8,273.8 167.1,266.3 161.3,258 156.3,251.3 152.6,248 155.6,255 160.1,262.5 163.8,267.5 161.3,265 156.3,257.5 151.3,251.3 148.8,246.3 141.3,239.5 135,232 133.8,230.1 131.3,225.1 132,217.6 131.3,210.6 125,204.6 115.5,198.1 108,193.1 101.3,185.6 133.1,211.5 128,206.5 121.3,201.4 114.6,195.5 107.8,191.3 101.1,187.1 94.3,184.1 87.6,182.1 80.9,180.7 74.1,181.2 67.4,182.9 64,185.4 57.3,189.6 48.9,193 38.7,197.2 29.5,200.6 27.8,200.3 35.4,196.4 43.8,193 52.2,189.6 59,184.6 55.6,183.7 50.5,186.3 44.6,187.1 43.8,182.9 37.1,182.1 35.4,179.5 38.7,177.9 47.2,175.3 48.9,172.8 40.4,172.8 32,172 33.7,170.3 43,167.7 40.4,166.1Z"/>
<path d="M128.2,154.1 131.9,151.2 140.6,150.2 143.8,153.4 141.7,157.7 131.9,158.4Z"/>
<path d="M143.4,154.1 148.2,151.9 160.1,151.2 170.9,151.9 178,154.5 178.9,159.3 173.1,163.2 163.3,164.2 154.7,163.2 146.4,159.3Z"/>
<path d="M133.4,145.4 143.8,142.8 152.5,141.9 163.3,141.1 175.2,140.2 186.1,139.8 192.6,142.6 193.2,148 185,149.7 176.3,149.3 167.6,150.2 159,150.6 150.3,148.9 141.7,148.9Z"/>
<path d="M180.2,151.9 189.3,150.2 195.8,152.3 197.5,159.3 192.6,163.2 185,162.1 181.3,157.1Z"/>
<path d="M192.6,136.7 206.6,132.4 224,130.7 241.3,130.2 258.6,130.7 272.7,132.4 276.4,135.4 264,138.9 255.4,142.8 250,145 242.4,148 232.6,150.2 219.6,151 209.9,150.2 204.5,147.6 196.2,145 192.8,141.1Z"/>
<path d="M209.2,154.5 217.5,151.9 228.3,151.5 241.3,153.6 254.3,156.7 267.7,162.3 276.4,168.4 274.9,172.9 271.6,176.1 267.3,177.4 258.6,177 250,176.1 244.5,175.1 240.2,172.9 238.7,169.6 240.4,165.3 234.8,163.2 228.3,164.5 221.8,163.2 215.3,161 210.5,158.4Z"/>
<path d="M198.4,154.5 206.6,152.3 211,156.7 208.8,161.6 201.2,162.7 197.1,159.9Z"/>
<path d="M221.8,174 228.3,172.2 234.8,175.1 232.6,178.7 226.1,179.4Z"/>
<path d="M272,134 290,131 320,129.5 350,130 375,132 389,134.5 375,139 373,145 370,150 367,157 360,161 350,161 342,165 332,170 325,176 319,182 315.5,184.5 309,181 300,176 295,169 291,162.5 287.5,155 285,147 280,140 273,137Z"/>
<path d="M360,170 367.5,168.8 380,168.8 385,171.3 381,174.5 370,175.5 362.5,173.8Z"/>
<path d="M284.7,206.4 290.2,205.1 295.2,208.9 294,213.1 287.7,212.1 284,209.6Z"/>
<path d="M222.2,269 230.2,267.5 238.2,271.1 245.7,275.1 242.7,276.6 235.2,274.1 227.7,271.6Z"/>
<path d="M247.7,275.1 253.2,274.6 259.2,276.6 258.2,279.1 252.2,278.6 248.2,278.1Z"/>
<path d="M236.2,301.1 239.6,298.2 243.8,294.9 248.9,292.3 252.2,293.2 253.9,296.5 257.3,294.9 262.3,296.5 269.1,297.4 274.1,296.5 276.7,298.2 279.2,301.6 284.2,305.8 291,308.3 296.9,310.9 300.2,315.9 301.9,321 307.8,323.5 314.6,325.2 321.3,326.9 328,329.4 333.1,332.8 335.6,337 336.4,337.5 333.9,346.3 327.7,353.8 326.4,362.6 323.9,370.1 316.4,375.1 307.7,378.8 303.9,386.4 297.6,393.9 290.1,398.9 285.1,402.6 281.4,408.9 273.9,410.1 272.6,415.1 267.6,417.6 268.9,422.7 263.9,425.2 265.1,430.2 260.1,433.9 257.6,436.4 262.6,442.7 268.9,445.2 260.1,447.7 251.3,445.2 246.3,442.7 242.6,435.2 242.6,427.7 246.3,417.6 248.8,407.6 251.3,395.1 252.6,382.6 253.8,370.1 251.3,360.1 243.8,352.6 239.6,349.6 236.2,342.9 232.9,336.1 230,331.1 230.3,326 232,320.1 235.4,314.2 237.9,307.5Z"/>
<path d="M275.1,438.2 280.1,437.2 285.1,438.4 281.4,440.2 276.4,439.7Z"/>
<path d="M394.3,235.9 393.8,229.2 395.1,222.4 400.2,221.1 406.9,222.1 414,223.3 412.8,217.4 410.3,213.2 404.9,211 410.3,208.1 416.2,206.4 419.5,203.6 424.6,200.5 429.1,198 433.9,196.3 435.5,193 434.7,189.6 438.1,188.4 440.3,193 441.4,195.8 447.3,195.5 452.4,194.1 459.1,195.1 462.8,193.5 464.2,191.3 465.9,189.6 466.7,187.1 469.2,185.7 472.6,185 476.8,183.7 479.7,182.3 474.3,182.3 469.2,183.4 466.2,183.7 466.9,181.2 469.2,177 472.6,172.7 471.9,169.9 469.2,169.2 465.5,171.1 461.1,174.4 457.1,178.3 454.9,182 455.4,185.7 452.4,189.1 449.9,192.1 446.5,192.5 444,187.9 442.3,183.7 439.2,186.2 433.9,187.4 428.8,184.5 426.8,180.3 432.2,177 438.9,171.9 445.6,166 452.4,162.6 460.8,160.1 469.2,158.4 476.8,158.1 486.1,160.1 494.5,162.6 502.9,165.2 508.8,167.7 508,171.1 501.2,172.7 496.2,171.6 496.4,173.8 500.1,176.3 507.6,173.8 513.9,170.1 517.6,166.3 525.2,165.1 527.7,162.6 531.4,166.3 540.2,165.1 550.2,162.6 560.2,163.8 566.5,161.3 572.7,158.8 575.2,155 580.2,153.8 584,157.5 582.7,163.8 586.5,166.3 590.2,160.1 594,157.5 600.3,156.3 575,155 580,153.8 587.5,155 597.5,152.5 610.1,148.8 622.6,146.3 635.1,145 647.6,143.8 660.1,145 672.6,147.5 676.4,152.5 685.2,153.8 695.2,152.5 705.2,153.8 712.7,157.5 722.7,157.5 735.2,155 750.2,156.3 755.7,156.3 763.2,157.5 773.2,158.8 785.7,161.3 803.2,161.3 815.7,160.6 823.3,161.3 827,163.8 823.3,167.6 820.7,171.3 824.5,173.8 825.8,176.3 818.2,178.8 810.7,180.1 803.2,182.6 796.2,180.1 795.7,184.6 791.7,190.6 786.7,195.6 780.2,202.1 772.7,206.9 771.2,199.6 773.7,192.6 778.7,186.1 783.7,182.1 779.4,181.3 773.2,185.1 763.2,186.3 758.2,184.6 743.2,187.6 733.1,191.3 725.6,195.1 733.1,196.3 739.4,198.8 741.1,205.1 739.6,212.6 738.1,220.1 734.4,225.1 728.1,223.9 723.1,223.1 716.1,230.1 710.1,232.1 711.1,239.6 707.1,243.7 703.6,240.2 702.6,234.6 698.1,228.6 690.6,230.1 686.1,233.9 694.3,235.1 692.7,236 689.3,240.2 692.7,245.2 696.1,250.3 693.6,256.2 690.2,261.2 686,265.4 682.7,264.3 676,268.3 669.3,271 664,272.6 660.7,277 660,277.9 661.6,281.7 664.7,285.7 666.1,291 664.8,295 660.3,299 657.3,301.1 654.9,299.3 651.7,293.9 647.3,290.7 642.9,289.9 642.5,292.1 642.9,296.1 644.5,300.1 646.5,304.1 649.1,306.5 651.5,309 652.5,313 654,317 654.9,321.5 654.5,321 652,319 649.1,316.5 646.5,313 645.1,309 643.5,305 641.5,301 640,296.1 639.5,292.1 640,288.3 638.7,281.7 634.9,281.7 632,284.3 631.2,281.7 629.3,275 625.6,269.7 620,270.7 622,269.6 618.6,270.5 621.1,266.2 619.4,268.7 616.9,272.1 612.7,275.5 607.6,279.7 602.5,283.9 599.2,287.3 598.3,292.3 595.8,297.4 593.3,301.6 590.8,298.2 588.2,293.2 585.7,287.3 583.2,280.5 581.5,273.8 579,269.6 577.3,272.1 574.8,271.3 572.2,267.9 568.9,263.7 562.1,263.7 553.7,262.9 545.3,260.3 544.3,259.7 543.4,260.5 546,263.9 549.3,267.3 551.9,271 546.8,276.5 539.2,281.6 530.8,285.8 522.4,289.2 516.3,291.4 515.1,287.8 511.9,281.9 508.6,275.2 505.2,268.5 501,261.7 496.6,255.1 495.1,253 492.9,251.3 495.4,248.7 496.3,242.9 497.1,239.5 494.6,241.2 488.7,240.3 480.3,238.6 471.8,237.8 477.7,230.9 481,227.5 476.8,228.3 472.6,229.2 469.2,230.9 470.9,235.1 467.5,237.6 464.2,234.2 462.5,229.2 459.1,224.1 454.1,219.1 449.9,214.9 447,214.4 447.3,216 449.4,218.9 452.4,222.3 454.9,225.3 457.4,227 460.8,229 462.8,231.2 458.8,233.7 459.5,236.3 457.1,236.6 454.9,234.6 451.5,230.4 447.7,226.1 444,221.1 441.4,216.9 438.6,216 433.9,220.8 430.5,222.4 425.4,221.6 421.2,224.1 419.9,227.8 418.2,231.7 415.3,235.1 410.3,237.3 401.8,238.3 397.6,236.8Z M480.3,222.6 482.8,218.4 488.7,215.9 494.6,217.6 497.1,219.3 502.2,220.1 508.9,222.6 510.6,225.2 505.5,226.5 498.8,226 492.1,226.8 485.3,226 481.1,225.2Z M525.9,219.6 532.7,220.9 536.9,225.1 538.2,232.6 535.7,237.6 530.2,235.6 527.7,230.1 525.2,225.1Z M525.8,253 529.1,254.6 532.5,260.5 535.9,264.8 540.9,263.1 543.9,260 542.6,258.9 537.5,258.9 533.3,256.3 530,253Z"/>
<path d="M397.6,244.3 401,241 406.9,239.3 413.6,240.1 421.2,238.4 428.8,237.6 435.5,236.3 439.8,235.6 441.9,237.6 440.6,241.8 443.1,244.3 448.2,246.4 452.4,249.4 456.6,250.2 459.1,247.7 455,249.6 461.7,246.2 468.5,247.1 475.2,249.6 482.8,249.6 489.5,251.3 492.9,251.3 491.2,253 494.6,260.5 498,267.3 501.3,274 504.7,280.8 508.9,287.5 512.8,292.9 516.5,294.7 522.4,294.1 532.5,292.7 532.8,294.7 530.2,300.1 525.2,308.8 517.7,316.3 511.4,322.6 507.7,330.1 506.4,337.6 507.7,345.1 508.9,351.4 507.7,357.6 501.4,363.9 496.4,368.9 496.4,375.2 492.7,380.2 487.7,386.4 482.7,392.7 479.6,395.6 475.1,397.6 467.6,398.8 460.1,399.6 456.3,396.3 453.8,387.6 450.1,377.6 446.3,367.5 442.6,357.5 443.9,350.1 445.1,342.6 443.9,335.1 441.4,330.1 437.6,325.1 438.8,320.1 436.3,313.8 432.6,310.1 427.6,306.3 418.8,307.1 408.8,308.8 397.5,310.1 390,306.3 385,300.1 380,293.8 376.3,286.3 377.5,275 380,265 385,255Z"/>
<path d="M516.4,357.6 524,350.1 529,348.9 531.5,355.1 527.7,367.6 522.7,377.7 517.7,378.9 515.2,370.2Z"/>
<path d="M674.3,372.6 676.8,368.8 685.6,366.3 694.3,361.3 698.1,356.3 703.1,352.6 709.4,353.8 713.1,348.8 719.4,346.3 725.6,347.6 728.1,351.3 724.4,356.3 730.6,360.1 736.9,361.3 739.4,353.8 740.6,346.3 744.4,353.8 746.9,361.3 753.2,367.6 759.4,373.8 764.4,377.6 765.7,385.1 764.4,392.6 760.7,400.1 756.9,406.4 749.4,408.9 743.2,407.6 738.1,405.1 734.4,400.1 730.6,396.4 729.4,402.6 725.6,398.9 721.9,393.9 713.1,392.6 704.4,393.9 696.8,397.6 688.1,398.9 679.3,400.1 676.8,393.9 675.6,385.1 673.1,378.8Z"/>
<path d="M745.7,413.9 754.4,413.9 753.2,418.9 749.4,421.4 746.9,417.6Z"/>
<path d="M811.2,399.6 813.7,403.1 815.7,407.1 820.7,406.4 824,408.1 821.2,413.1 817,417.1 813.7,415.6 815.2,411.4 813.2,407.6 812,403.9Z"/>
<path d="M813.2,414.6 816.2,417.6 812,421.4 807,424.7 801.2,427.2 797,427.7 795.7,424.7 801.2,421.4 807,417.6Z"/>
<path d="M716.9,323.8 721.9,321.3 728.1,322.5 734.4,325 740.6,325 748.2,327.5 755.7,331.3 763.2,330 764.4,333.8 760.7,337.5 758.2,341.3 760.2,345.6 753.2,343.1 749.4,340.1 745.7,342.1 739.4,342.6 735.6,339.5 731.9,338 728.1,334.5 724.4,332.5 721.1,328.8 717.6,326.3Z"/>
<path d="M633.5,308.5 638,309.5 642,313 646,317 650,321 654,324.5 657,327 657.5,330 657,334.5 653,334 649,331 645,327 641,322 637,317 634,312.5Z"/>
<path d="M657.5,334.5 665,336.5 673,338.5 681,339.5 689,340 688,341.8 677,341 667,339.3 659,336.3Z"/>
<path d="M665,317 670,314 675,311 679,308 683,305 687,299 691,294 695,297 693,303 689,308 686,310 685,313 686,317 684,320 683,324 681,328 677,329.5 673,327 669,327 667,324 665.5,320Z"/>
<path d="M689.4,320.6 696.4,318.9 700.2,320.6 693.9,323.1 696.4,328.9 693.2,332.1 690.2,327.6Z"/>
<path d="M690.4,279.3 693.3,278.3 694.9,282.3 696,288.3 698,293 694.7,292.3 692,289 690.3,284.3Z"/>
<path d="M697.7,300.6 702.7,300.1 704.5,306.3 700.2,307.6 698.2,304.6Z"/>
<path d="M597.2,299.9 600,298.2 602.5,301.6 602.2,305.8 599.2,307.2 597.5,304.1Z"/>
<path d="M691.3,264.1 693.6,263.3 694.1,267 692.7,270.3 690.7,267.7Z"/>
<path d="M664,275.7 666.7,274.7 668.3,276.6 666.7,279.3 664.3,278.3Z"/>
<path d="M401.8,186.2 407.7,185 411.1,187.9 409.9,192.1 413.3,195.1 416.2,198.5 419.5,200.5 420,204.2 416.2,206.4 410.3,207.3 404.9,208.1 407.7,205.3 404.9,203.1 407.7,200.5 405.6,197.2 402.7,194.6 401.8,190.4Z"/>
<path d="M392.6,197.2 397.6,195.5 401.8,198 401,202.2 395.1,203.9 391.7,201.4Z"/>
<path d="M710.6,244.7 717.6,240.7 725.1,239.1 732.1,235.1 736.1,229.1 738.6,224.1 742.6,225.1 743.7,231.4 740.6,237.6 734.6,244.2 726.6,246.7 720.1,247.2 716.1,250.7 712.1,249.7Z"/>
<path d="M738.6,220.1 743.2,217.6 749.4,220.1 745.7,223.9 740.6,224.6Z"/>
<path d="M739.4,197.6 742.6,198.8 743.2,206.4 745.7,216.4 742.6,217.1 740.6,207.6Z"/>
<path d="M440.1,138.8 450.1,137 462.6,136.3 476.3,137.5 472.6,141.3 465.1,143.8 455.1,145 447.6,142.5Z"/>
<path d="M572.7,145 562.7,146.3 550.2,149.5 540.2,152.5 533.9,156.3 536.4,159.5 546.4,160.1 552.7,157.5 543.9,157 541.4,155 550.2,152 562.7,148.8 574,146.3Z"/>
<path d="M518.9,136.3 530.2,135 540.2,135.5 550.2,133.8 564,135 560.2,137.5 547.7,137.5 535.2,138 525.2,138Z"/>
<path d="M620.1,136.3 630.1,135 640.1,137.5 650.1,140 660.1,142.5 658.9,145 647.6,144.5 635.1,142.5 625.1,140Z"/>
<path d="M725.6,147 733.1,145.5 743.2,146.3 755.7,147 760.7,148.8 748.2,150 735.6,150.5 726.9,149.5Z"/>
<path d="M4,163.5 9,164.5 15,166.5 23,168.5 27.5,169.5 25,171 20,173 15,171.5 9,169.5 4,171.5Z"/>
<path d="M707.6,244.7 711.1,243.7 712.1,249.2 709.1,251.2 707.1,247.7Z"/>
<path d="M696.3,293.9 700,293.4 701.6,296.3 700,299.7 697.3,299 695.7,296.3Z"/>
<path d="M682.7,304.6 689.3,296.6 690.7,295.3 691.5,296.1 684.3,305.4Z"/>
<path d="M692.7,293 694.7,292.6 694.9,295 693.1,295.3Z"/>
<path d="M705.6,316.3 709.4,315.5 710.6,321.3 708.6,325.5 706.1,322.5Z"/>
<path d="M686.8,338 698.1,335 699.1,337 688.6,340.6Z"/>
<path d="M451.5,237.6 457.8,236.9 457.1,240.6 453.2,240Z"/>
<path d="M434.2,223.1 436.9,222.8 437.1,230.9 434.7,231.2Z"/>
<path d="M435.2,217.7 436.9,217.7 436.9,221.8 435.4,221.9Z"/>
<path d="M469.2,239.8 479.3,240.3 479,241.5 469.6,241.1Z"/>
<path d="M489.4,237.6 494.5,236.3 494.2,238.3 490.3,238.9Z"/>
</g>
<path fill="#000" d="M4,157h6v2h-6zM22,175.5h8v1.5h-8zM19.5,182h3v1.5h-3zM32,182.5h5v2h-5zM7.5,201h6v1.5h-6zM15,200.8h5v1.2h-5zM24.5,200.5h1v1h-1zM62,188h6v3h-6zM66,186.5h3v1.5h-3zM393.9,157.5h3.7v1.7h-3.7zM398,177.5h3.3v1.7h-3.3zM411.3,182h2.5v1.7h-2.5zM350,232h2v1.5h-2zM353,233h2v1.5h-2zM356.5,233.5h2v1.5h-2zM376.3,245h2v1.5h-2zM373.8,255h2.5v1.5h-2.5zM377.5,256h3v2h-3zM381.5,255h3v1.5h-3zM385,254.5h2v1.2h-2zM267,246.3h1.5v1.5h-1.5zM205,320.5h3.5v2.5h-3.5zM209,321.5h2v1.5h-2zM235,258.8h2v1.5h-2zM238,261h1.5v2.5h-1.5zM240.5,264h2v1.5h-2zM236.5,267h2v1.5h-2zM241.5,269h1.5v1.5h-1.5zM261.3,278h5v1.5h-5zM236.3,278h3.8v1.5h-3.8zM271.3,279h1.5v1.5h-1.5zM273.5,281.5h1.2v1.5h-1.2zM275,284h1.2v1.5h-1.2zM276,287h1.2v1.5h-1.2zM276.5,290h1.2v1.8h-1.2zM277,293.5h2.5v1.8h-2.5zM21.3,351.7h2.5v1.8h-2.5zM14.7,364.5h1.5v1.5h-1.5zM16,367.5h1.5v1.8h-1.5zM11,420.6h2.2v2.2h-2.2zM296.5,320.5h7v3.5h-7zM299,319h5v2h-5zM361.3,283.8h1.5v1.5h-1.5zM363,286h1.5v1.2h-1.5zM536.3,292h3.8v1.2h-3.8zM513.8,346.3h1.8v1.5h-1.8zM516,348h1.8v1.2h-1.8zM542,367h1.8v2h-1.8zM545.5,367.5h1.8v1.5h-1.8zM541.3,330.5h2v1.5h-2zM430.8,315.5h1.5v1.5h-1.5zM433,318h1.5v1.5h-1.5zM572.7,431.4h3.8v3h-3.8zM581.5,441.9h2.5v0.8h-2.5zM514,347h1v1h-1zM582.3,304h1.3v3h-1.3zM582.3,308h1.3v4h-1.3zM582.5,313h1.3v3.5h-1.3zM582.3,317.5h1.3v4.5h-1.3zM627,288.8h1.2v4h-1.2zM627.6,293.5h1.2v4h-1.2zM628.8,300h1.2v1.5h-1.2zM629.5,302.5h1.2v1.5h-1.2zM768,332.5h3v1.5h-3zM772,335h3.5v1.5h-3.5zM776.5,337.5h3v1.5h-3zM780,340h3.5v1.5h-3.5zM783,343h3v1.5h-3zM774,338.5h2.5v1.2h-2.5zM797,352.5h1.5v3h-1.5zM798.5,357h1.5v3.5h-1.5zM800,362h1.5v3h-1.5zM790,367h3v1.8h-3zM793,369h3.5v2h-3.5zM820.8,360h3v1.5h-3zM824.5,361.5h2.5v1.5h-2.5zM794.5,436.4h1.5v1.5h-1.5zM759.4,328.8h5v1.5h-5zM764,327.5h5v1.8h-5zM768,326h2.5v2h-2.5zM658,335.5h5v1.8h-5zM664.5,336.5h6v2h-6zM672,337.5h7v1.8h-7zM681,338h5v1.5h-5zM684,340h9v2h-9zM693,338.5h3v1.5h-3zM705.6,316.5h2v4h-2zM707,320.5h2.5v4.5h-2.5zM708,327.5h12v2h-12zM697,327h5v1.8h-5zM793,193.8h6.3v1.7h-6.3zM809.3,199.5h3.7v1h-3.7zM820.5,201.3h6.3v1.7h-6.3zM824.3,157h2.5v1.8h-2.5zM708,256.3h1.5v1.5h-1.5zM710,258.5h1.7v1.5h-1.7zM704,262h1.5v1.5h-1.5zM328.9,443.8h6.3v2.5h-6.3zM310,458.8h2.5v1.3h-2.5zM207.5,477.5h2v1.5h-2zM275,463.6h4v1.2h-4zM280,462.6h4v1.2h-4zM285,461.6h4v1.2h-4zM288.5,460.3h2v1.2h-2z"/>
<path d="M4.5,500 L37.5,500 L52.5,498 L70,497 L80,493.8 L100,491.8 L115,490 L130,488 L145,489.5 L160,490.8 L170,492 L177.5,487.5 L185,485.5 L197.5,485.5 L208,486.3 L215,486.3 L235,487.5 L241,485 L244,481 L250,478.8 L257.5,477.5 L261,473.8 L267.5,471.3 L275,468 L283.8,466.3 L280,468.8 L276,472.5 L276,481 L278.8,487.5 L275,491 L285,493.8 L300,497.5 L313.8,499.5 L332.5,498.8 L350,495 L362.5,491 L375,486 L390,482.5 L400,481.8 L411,480.5 L414.5,478.3 L417.5,480.5 L430,481.3 L443.8,480.5 L448.8,479 L453.8,480.5 L470,481.8 L482.5,480 L491,478 L501,481.3 L507.5,478 L520,475 L530,472.5 L537.5,471.3 L545,473.8 L555,475 L572.5,476.3 L580,478.8 L585,480 L592.5,478.8 L600,475 L602.5,472 L608.3,472 L619.5,473.4 L633.4,471 L634.8,469.2 L641.7,470.6 L650,470 L664,473.4 L673.7,471 L683.4,473.4 L691.7,472 L702.9,472.8 L711.2,474 L714,471 L723.7,470 L727.9,472 L747.3,474 L755.7,477 L769.6,477.5 L783.5,481 L794.6,483 L804.3,484.5 L805.2,486.7 L794.6,490 L789,493.4 L786.8,496.2 L791.8,498.4 L805.7,497.8 L826.5,499.8" fill="none" stroke="#000" stroke-width="1"/>
<path d="M4,526.5H827" stroke="#666" stroke-width="1" fill="none"/>
<path d="M4.5,500V526M826.5,500V526" stroke="#444" stroke-width="1" fill="none"/>
<g>
<rect x="40" y="246" width="27" height="224" fill="#000"/>
<rect x="42" y="248" width="23" height="220" fill="#fff"/>
<rect x="43" y="249" width="21" height="54" fill="#440154"/>
<rect x="43" y="303" width="21" height="55" fill="#31688e"/>
<rect x="43" y="358" width="21" height="56" fill="#35b779"/>
<rect x="43" y="413.6" width="21" height="53.4" fill="#fde725"/>
<path d="M66,247H71M66,321H71M66,395H71M66,469H71" stroke="#000" stroke-width="2" fill="none"/>
<g font-family="DejaVu Sans, Liberation Sans, sans-serif" font-size="11" fill="#000" text-rendering="geometricPrecision">
<text x="42" y="235.6" textLength="61" lengthAdjust="spacingAndGlyphs"># seasons</text>
<text x="78" y="251"> 0</text>
<text x="78" y="325"> 1</text>
<text x="78" y="399"> 2</text>
<text x="78" y="473"> 3</text>
</g>
</g>
<path d="M744,389.5H755M749.5,384V395" stroke="#000" stroke-width="2" fill="none"/>

</g>
</svg>
<svg width="831" height="600" viewBox="0 0 831 600">
<defs>
<linearGradient id="gl" x1="0" y1="0" x2="0" y2="1"><stop offset="0" stop-color="#fdfdfd"/><stop offset="1" stop-color="#dcdcdc"/></linearGradient>
<g id="mag">
<path d="M-5.2,5.8L-12.6,12.6" stroke="#6b5a10" stroke-width="3.6" stroke-linecap="round"/>
<path d="M-5.6,6.2L-12.4,12.4" stroke="#f3c522" stroke-width="2" stroke-linecap="round"/>
<path d="M-4.2,4.6L-6.6,7" stroke="#111" stroke-width="3.2" stroke-linecap="round"/>
<circle cx="0" cy="0" r="7.7" fill="url(#gl)" stroke="#8c8c8c" stroke-width="1.5"/>
</g>
<g id="badge"><rect x="0" y="0" width="11" height="10.4" rx="2" fill="#34566f" stroke="#2a4860" stroke-width="0.6"/></g>
</defs>
<!-- grip --><rect x="7" y="34.60" width="2" height="1.6" fill="#7a7a7a"/><rect x="8.3" y="35.60" width="2.2" height="2" fill="#fff"/><rect x="7" y="38.65" width="2" height="1.6" fill="#7a7a7a"/><rect x="8.3" y="39.65" width="2.2" height="2" fill="#fff"/><rect x="7" y="42.70" width="2" height="1.6" fill="#7a7a7a"/><rect x="8.3" y="43.70" width="2.2" height="2" fill="#fff"/><rect x="7" y="46.75" width="2" height="1.6" fill="#7a7a7a"/><rect x="8.3" y="47.75" width="2.2" height="2" fill="#fff"/><rect x="7" y="50.80" width="2" height="1.6" fill="#7a7a7a"/><rect x="8.3" y="51.80" width="2.2" height="2" fill="#fff"/><rect x="7" y="54.85" width="2" height="1.6" fill="#7a7a7a"/><rect x="8.3" y="55.85" width="2.2" height="2" fill="#fff"/><rect x="7" y="58.90" width="2" height="1.6" fill="#7a7a7a"/><rect x="8.3" y="59.90" width="2.2" height="2" fill="#fff"/><rect x="7" y="62.95" width="2" height="1.6" fill="#7a7a7a"/><rect x="8.3" y="63.95" width="2.2" height="2" fill="#fff"/><rect x="7" y="67.00" width="2" height="1.6" fill="#7a7a7a"/><rect x="8.3" y="68.00" width="2.2" height="2" fill="#fff"/>
<!-- 1 render map -->
<path d="M22.5,49V61.8H28.8" fill="none" stroke="#8a8a8a" stroke-width="1"/>
<rect x="24.5" y="44.1" width="15.2" height="14.8" fill="#ececec" stroke="#8a8a8a" stroke-width="1"/>
<rect x="35" y="52.2" width="10.8" height="10.4" rx="2" fill="#34566f"/>
<path d="M37,56.6h4l-2,2.6zM39.8,58.2h4l-2,-2.6z" fill="#fff"/>
<path d="M38.2,55.6c1.5,-1.6 4,-1.6 5.2,0M42.6,59.4c-1.5,1.6 -4,1.6 -5.2,0" fill="none" stroke="#fff" stroke-width="1"/>
<!-- 2 pointer -->
<path d="M61,43L72.9,45.1L68.7,47.7L75.9,54.6L73,57.6L65.7,50.8L62.9,54.6Z" fill="#e2e2e2" stroke="#3c3c3c" stroke-width="1" stroke-linejoin="round"/>
<!-- 3 select -->
<rect x="92.5" y="39.5" width="14" height="11" fill="#fce94f" stroke="#222" stroke-width="1" stroke-dasharray="1.2,1.2"/>
<path d="M105,50.8L112.3,52.6L109.9,54.6L115.8,59L113.6,61.8L108.3,57.1L106.6,59Z" fill="#eee" stroke="#3c3c3c" stroke-width="0.9" stroke-linejoin="round"/>
<!-- 4 query -->
<path d="M127.3,39.5L134.4,41L132.5,43L137.6,47L135.7,49.5L131,45.2L129,47Z" fill="#eee" stroke="#3c3c3c" stroke-width="0.9" stroke-linejoin="round"/>
<rect x="138.5" y="47.5" width="12" height="15" fill="#fff" stroke="#2f5672" stroke-width="1.3"/>
<path d="M140.6,50.8H148.4M140.6,53.9H148.4M140.6,57H148.4M140.6,60.1H148.4" stroke="#2f5672" stroke-width="1.2"/>
<!-- 5 pan -->
<g fill="#7b9fbb" stroke="#2f5672" stroke-width="0.9" stroke-linejoin="round">
<path d="M174,39.8L178.6,44.6H176V47.2H172V44.6H169.4Z"/>
<path d="M174,62.3L178.6,57.5H176V54.9H172V57.5H169.4Z"/>
<path d="M163.2,51L168,46.4V49H170.6V53H168V55.6Z"/>
<path d="M185,51L180.2,46.4V49H177.6V53H180.2V55.6Z"/>
</g>
<!-- 6 zoom in -->
<use href="#mag" x="211.4" y="48.3"/>
<path d="M207.2,48.2H215.8M211.5,44V52.4" stroke="#5e88aa" stroke-width="2.2"/>
<!-- 7 zoom out -->
<use href="#mag" x="246.5" y="48.3"/>
<path d="M242.2,48.3H250.9" stroke="#5e88aa" stroke-width="2.2"/>
<!-- 8 zoom extent -->
<g fill="#6f95b3" stroke="#2f5672" stroke-width="0.6" stroke-linejoin="round">
<path d="M267.2,39.2H274V41.5L271.8,42L274.5,45L272.6,46.8L269.8,44L269.4,46.2H267.2Z"/>
<path d="M290.6,39.2H283.8V41.5L286,42L283.3,45L285.2,46.8L288,44L288.4,46.2H290.6Z"/>
<path d="M290.6,62.6H283.8V60.3L286,59.8L283.3,56.8L285.2,55L288,57.8L288.4,55.6H290.6Z"/>
</g>
<use href="#mag" x="281.6" y="48.3"/>
<!-- 9 zoom region -->
<path d="M305.4,45V55.5M309,58.5H320" stroke="#333" stroke-width="1" stroke-dasharray="1,1.2" fill="none"/>
<path d="M303.2,42.3H307.6M305.4,40.1V44.5M320.4,58.5H324.8M322.6,56.3V60.7" stroke="#222" stroke-width="1" fill="none"/>
<use href="#mag" x="316.6" y="48.3"/>
<!-- 10 zoom back -->
<use href="#mag" x="351.4" y="48.3"/>
<use href="#badge" x="350" y="52.4"/>
<path d="M358.6,54.4L353.2,57.6L358.6,60.8L356.8,57.6Z" fill="#fff"/>
<!-- 11 zoom menu -->
<use href="#mag" x="386.4" y="48.3"/>
<use href="#badge" x="385" y="52.4"/>
<path d="M386.4,53.8H394.6V57.2H386.4Z" fill="#7e9db5"/>
<path d="M394.8,57.5V61.2H388.5" fill="none" stroke="#e8eef3" stroke-width="1"/>
<!-- 12 analyze -->
<g>
<rect x="415" y="40" width="12" height="11.6" fill="#8fb0c8"/>
<path d="M415,40h4v3.9h-4zM423,40h4v3.9h-4zM419,43.9h4v3.8h-4zM415,47.7h4v3.9h-4zM423,47.7h4v3.9h-4z" fill="#34566f"/>
<path d="M419,47.7h8v3.9h-8z" fill="#34566f"/>
<path d="M408.5,62V57.5h1.8V54.5h2V56.5h1.8V53.6h2V55.5h1.8V53h2V56h1.8V55h2V58h1.6V62z" fill="#8fb0c8"/>
<path d="M409.3,60.2L411.8,57L415.5,58.8L419.8,55.6L423.6,53.2L426.8,56.6" fill="none" stroke="#c81e1e" stroke-width="1.1"/>
<path d="M407.5,44.5V62.2H428.8" fill="none" stroke="#333" stroke-width="1"/>
<path d="M406.2,46.5L407.5,44L408.8,46.5M426.6,60.9L429.2,62.2L426.6,63.5" fill="none" stroke="#333" stroke-width="0.8"/>
</g>
<!-- 13 overlay -->
<rect x="442.6" y="39.8" width="3" height="3" fill="#f6ec2a" stroke="#444" stroke-width="0.9"/>
<rect x="442.6" y="44.6" width="3" height="3" fill="#e85050" stroke="#444" stroke-width="0.9"/>
<path d="M447,42.1H451M447,47.4H451" stroke="#444" stroke-width="1"/>
<text x="457.6" y="47" font-family="DejaVu Sans, Liberation Sans, sans-serif" font-weight="bold" font-size="10.5" fill="#555">A</text>
<rect x="442.4" y="54.5" width="11.4" height="2.4" fill="#fff" stroke="#444" stroke-width="0.9"/>
<path d="M446.2,54.5v2.4M450,54.5v2.4" stroke="#444" stroke-width="0.9"/>
<rect x="456.2" y="53.3" width="9.8" height="9.4" rx="1.8" fill="#4f9a5c" stroke="#3d7c48" stroke-width="0.6"/>
<path d="M458.2,58H464M461.1,55.1V60.9" stroke="#fff" stroke-width="2"/>
<!-- 14 export -->
<path d="M478.2,41.5C478.2,40.4 480.6,40.4 480.6,41.8V43.8H496.6V61.6H481.5C479.5,61.6 477.4,60 477.8,58.2Z" fill="#dcdcdc" stroke="#8a8a8a" stroke-width="1" stroke-linejoin="round"/>
<path d="M480.6,43.8V58.5C480.6,60.4 478,60.4 477.9,58.6" fill="none" stroke="#8a8a8a" stroke-width="1"/>
<path d="M481.2,44.4H484V61H481.2Z" fill="#c9c9c9"/>
<rect x="490.2" y="52.3" width="10.6" height="10.4" rx="2" fill="#34566f"/>
<path d="M494.2,54.6H492.4V60.4H494.2" fill="none" stroke="#fff" stroke-width="1"/>
<path d="M493.6,57.5H498.6M496.6,55.3L498.9,57.5L496.6,59.7" fill="none" stroke="#fff" stroke-width="1.1"/>
<!-- window controls -->
<g stroke="#6e6e6e" fill="none" stroke-linecap="round" stroke-linejoin="round">
<path d="M749,19V13.4M745.2,15.8L749,12L752.8,15.8" stroke-width="3.7"/>
<path d="M768,18.2H774" stroke-width="4.0"/>
<rect x="788.8" y="10.8" width="8.6" height="8.4" stroke-width="3.0" stroke-linejoin="miter"/>
<rect x="791.3" y="13.4" width="3.6" height="3.2" stroke-width="2.5" stroke-linejoin="miter"/>
<path d="M811.2,11.2L818.8,18.8M818.8,11.2L811.2,18.8" stroke-width="3.7"/>
</g>
<g stroke="#fff" fill="none" stroke-linecap="round" stroke-linejoin="round">
<path d="M749,19V13.4M745.2,15.8L749,12L752.8,15.8" stroke-width="2.1"/>
<path d="M768,18.2H774" stroke-width="2.4"/>
<rect x="788.8" y="10.8" width="8.6" height="8.4" stroke-width="1.4" stroke-linejoin="miter"/>
<rect x="791.3" y="13.4" width="3.6" height="3.2" stroke-width="0.9" stroke-linejoin="miter"/>
<path d="M811.2,11.2L818.8,18.8M818.8,11.2L811.2,18.8" stroke-width="2.1"/>
</g>
<!-- checkbox tick -->
<path d="M751.2,581.8L755.2,586.2L761.2,577.4" fill="none" stroke="#2e3436" stroke-width="2.7" stroke-linecap="butt" stroke-linejoin="miter"/>
<!-- app icon -->
<g>
<path d="M5.2,13.2L16,4.2L27,13.6L16.6,25Z" fill="#fdfdfd" stroke="#c4c4c4" stroke-width="0.7"/>
<path d="M5.6,14L16.6,25.4L18,24" fill="none" stroke="#3a3a3a" stroke-width="1.3"/>
<path d="M7,25.2H13" stroke="#bdbdbd" stroke-width="0.8"/>
<path d="M13.2,21C13,17 12.4,14 11,11M15,22C15.2,16.6 16,11.6 16.2,6.4M15.8,22C17,17.6 19,13.6 21.6,10M12,18.6C11.6,16.6 11,15 10,13.6" fill="none" stroke="#2f9e2c" stroke-width="1.2" stroke-linecap="round"/>
<radialGradient id="glb" cx="0.4" cy="0.35" r="0.7"><stop offset="0" stop-color="#8fb3d1"/><stop offset="0.6" stop-color="#41709a"/><stop offset="1" stop-color="#274d70"/></radialGradient>
<circle cx="21.8" cy="20.6" r="5.2" fill="url(#glb)"/>
<path d="M19.4,18.4c1,-1 2.8,-1.4 3.8,-0.6c-0.4,1.2 -1.4,1.2 -1.6,2.2c0.8,0.6 0.4,2 -0.4,2.6c-1,-0.8 -1.8,-2.6 -1.8,-4.2z" fill="#b5cfe4" opacity=".6"/>
</g>
</svg>
</div>
<div id="frame"></div>
</div>
</body>
</html>
